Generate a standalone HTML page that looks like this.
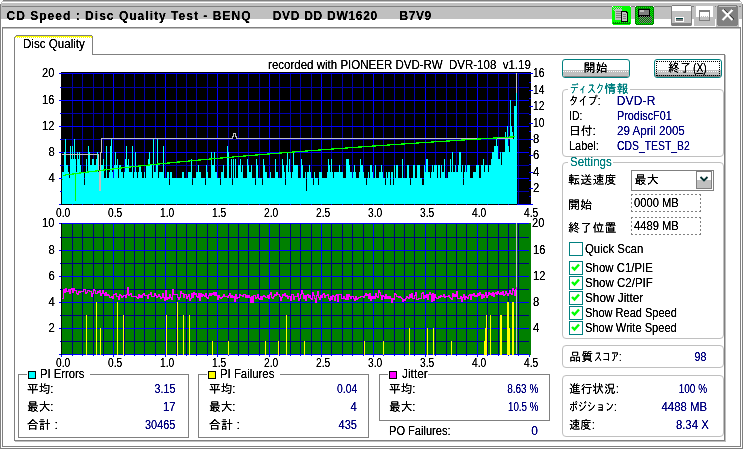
<!DOCTYPE html>
<html><head><meta charset="utf-8"><title>CD Speed : Disc Quality Test</title>
<style>
html,body{margin:0;padding:0;background:#fff;}
body{width:743px;height:449px;position:relative;overflow:hidden;font-family:"Liberation Sans","IPAGothic","Noto Sans CJK JP",sans-serif;font-size:12px;}
.r{position:absolute;}
.t{position:absolute;white-space:pre;}
.i{display:inline-block;}
svg{position:absolute;left:0;top:0;}
#txt{position:absolute;left:0;top:0;width:743px;height:449px;}
.t{filter:url(#thr);}
.t.k{filter:url(#thk);}
</style></head><body>
<svg width="0" height="0"><defs><filter id="thr" x="-5%" y="-25%" width="110%" height="150%" color-interpolation-filters="sRGB"><feComponentTransfer><feFuncA type="linear" slope="1.8" intercept="-0.15"/></feComponentTransfer></filter><filter id="thk" x="-5%" y="-25%" width="110%" height="150%" color-interpolation-filters="sRGB"><feComponentTransfer><feFuncA type="linear" slope="2" intercept="-0.2"/></feComponentTransfer></filter></defs></svg>
<div class="r" style="left:0px;top:0px;width:743px;height:449px;background:#fff;"></div><div class="r" style="left:0px;top:0px;width:743px;height:1px;background:#808080;"></div><div class="r" style="left:0px;top:1px;width:743px;height:1px;background:#c0c0c0;"></div><div class="r" style="left:0px;top:2px;width:743px;height:1px;background:#fff;"></div><div class="r" style="left:0px;top:3px;width:743px;height:3px;background:#c0c0c0;"></div><div class="r" style="left:0px;top:6px;width:743px;height:1px;background:#808080;"></div><div class="r" style="left:0px;top:7px;width:743px;height:12px;background:#c0c0c0;"></div><div class="r" style="left:0px;top:19px;width:743px;height:8px;background:#fff;"></div><div class="r" style="left:0px;top:27px;width:743px;height:1px;background:#808080;"></div><div class="r" style="left:0px;top:28px;width:743px;height:1px;background:#c0c0c0;"></div><div class="r" style="left:0px;top:0px;width:1px;height:449px;background:#808080;"></div><div class="r" style="left:1px;top:1px;width:1px;height:18px;background:#c0c0c0;"></div><div class="r" style="left:1px;top:19px;width:1px;height:429px;background:#fff;"></div><div class="r" style="left:2px;top:27px;width:1px;height:420px;background:#808080;"></div><div class="r" style="left:742px;top:0px;width:1px;height:449px;background:#808080;"></div><div class="r" style="left:741px;top:1px;width:1px;height:18px;background:#c0c0c0;"></div><div class="r" style="left:741px;top:19px;width:1px;height:429px;background:#fff;"></div><div class="r" style="left:740px;top:27px;width:1px;height:420px;background:#808080;"></div><div class="r" style="left:0px;top:448px;width:743px;height:1px;background:#808080;"></div><div class="r" style="left:1px;top:447px;width:741px;height:1px;background:#fff;"></div><div class="r" style="left:2px;top:446px;width:739px;height:1px;background:#808080;"></div><div class="r" style="left:0px;top:0px;width:3px;height:1px;background:#fff;"></div><div class="r" style="left:740px;top:0px;width:3px;height:1px;background:#fff;"></div><div class="r" style="left:0px;top:1px;width:2px;height:1px;background:#fff;"></div><div class="r" style="left:741px;top:1px;width:2px;height:1px;background:#fff;"></div><div class="r" style="left:0px;top:2px;width:1px;height:1px;background:#fff;"></div><div class="r" style="left:742px;top:2px;width:1px;height:1px;background:#fff;"></div><div class="r" style="left:0px;top:3px;width:1px;height:1px;background:#fff;"></div><div class="r" style="left:742px;top:3px;width:1px;height:1px;background:#fff;"></div><div class="r" style="left:14px;top:54px;width:711px;height:1px;background:#808080;"></div><div class="r" style="left:14px;top:54px;width:1px;height:387px;background:#808080;"></div><div class="r" style="left:724px;top:54px;width:1px;height:387px;background:#808080;"></div><div class="r" style="left:725px;top:55px;width:1px;height:387px;background:#c0c0c0;"></div><div class="r" style="left:14px;top:440px;width:711px;height:1px;background:#808080;"></div><div class="r" style="left:15px;top:441px;width:711px;height:1px;background:#c0c0c0;"></div><div class="r" style="left:14px;top:37px;width:1px;height:18px;background:#808080;"></div><div class="r" style="left:92px;top:37px;width:1px;height:18px;background:#808080;"></div><div class="r" style="left:16px;top:35px;width:76px;height:1px;background:#808080;"></div><div class="r" style="left:15px;top:36px;width:1px;height:1px;background:#808080;"></div><div class="r" style="left:92px;top:36px;width:1px;height:1px;background:#808080;"></div><div class="r" style="left:16px;top:36px;width:76px;height:1px;background:#ffff00;"></div><div class="r" style="left:15px;top:37px;width:77px;height:1px;background:repeating-linear-gradient(90deg,#ffff00 0 1px,#fff 1px 2px);"></div><div class="r" style="left:15px;top:38px;width:77px;height:17px;background:#fff;"></div><svg width="743" height="449" viewBox="0 0 743 449" shape-rendering="crispEdges"><rect x="61" y="72" width="470" height="133" fill="#000"/><rect x="72" y="73" width="1" height="132" fill="#0000aa"/><rect x="82" y="73" width="1" height="132" fill="#0000aa"/><rect x="93" y="73" width="1" height="132" fill="#0000aa"/><rect x="103" y="73" width="1" height="132" fill="#0000aa"/><rect x="113" y="73" width="1" height="132" fill="#0000ff"/><rect x="124" y="73" width="1" height="132" fill="#0000aa"/><rect x="134" y="73" width="1" height="132" fill="#0000aa"/><rect x="144" y="73" width="1" height="132" fill="#0000aa"/><rect x="155" y="73" width="1" height="132" fill="#0000aa"/><rect x="165" y="73" width="1" height="132" fill="#0000ff"/><rect x="176" y="73" width="1" height="132" fill="#0000aa"/><rect x="186" y="73" width="1" height="132" fill="#0000aa"/><rect x="196" y="73" width="1" height="132" fill="#0000aa"/><rect x="207" y="73" width="1" height="132" fill="#0000aa"/><rect x="217" y="73" width="1" height="132" fill="#0000ff"/><rect x="228" y="73" width="1" height="132" fill="#0000aa"/><rect x="238" y="73" width="1" height="132" fill="#0000aa"/><rect x="248" y="73" width="1" height="132" fill="#0000aa"/><rect x="259" y="73" width="1" height="132" fill="#0000aa"/><rect x="269" y="73" width="1" height="132" fill="#0000ff"/><rect x="279" y="73" width="1" height="132" fill="#0000aa"/><rect x="290" y="73" width="1" height="132" fill="#0000aa"/><rect x="300" y="73" width="1" height="132" fill="#0000aa"/><rect x="311" y="73" width="1" height="132" fill="#0000aa"/><rect x="321" y="73" width="1" height="132" fill="#0000ff"/><rect x="331" y="73" width="1" height="132" fill="#0000aa"/><rect x="342" y="73" width="1" height="132" fill="#0000aa"/><rect x="352" y="73" width="1" height="132" fill="#0000aa"/><rect x="363" y="73" width="1" height="132" fill="#0000aa"/><rect x="373" y="73" width="1" height="132" fill="#0000ff"/><rect x="383" y="73" width="1" height="132" fill="#0000aa"/><rect x="394" y="73" width="1" height="132" fill="#0000aa"/><rect x="404" y="73" width="1" height="132" fill="#0000aa"/><rect x="414" y="73" width="1" height="132" fill="#0000aa"/><rect x="425" y="73" width="1" height="132" fill="#0000ff"/><rect x="435" y="73" width="1" height="132" fill="#0000aa"/><rect x="446" y="73" width="1" height="132" fill="#0000aa"/><rect x="456" y="73" width="1" height="132" fill="#0000aa"/><rect x="466" y="73" width="1" height="132" fill="#0000aa"/><rect x="477" y="73" width="1" height="132" fill="#0000ff"/><rect x="487" y="73" width="1" height="132" fill="#0000aa"/><rect x="498" y="73" width="1" height="132" fill="#0000aa"/><rect x="508" y="73" width="1" height="132" fill="#0000aa"/><rect x="518" y="73" width="1" height="132" fill="#0000aa"/><rect x="61" y="191" width="468" height="1" fill="#0000aa"/><rect x="61" y="178" width="468" height="1" fill="#0000ff"/><rect x="61" y="165" width="468" height="1" fill="#0000aa"/><rect x="61" y="152" width="468" height="1" fill="#0000ff"/><rect x="61" y="139" width="468" height="1" fill="#0000aa"/><rect x="61" y="126" width="468" height="1" fill="#0000ff"/><rect x="61" y="113" width="468" height="1" fill="#0000aa"/><rect x="61" y="100" width="468" height="1" fill="#0000ff"/><rect x="61" y="87" width="468" height="1" fill="#0000aa"/><rect x="61" y="73" width="468" height="1" fill="#0000ff"/><rect x="59" y="204" width="2" height="1" fill="#0000ff"/><rect x="60" y="191" width="1" height="1" fill="#0000ff"/><rect x="59" y="178" width="2" height="1" fill="#0000ff"/><rect x="60" y="165" width="1" height="1" fill="#0000ff"/><rect x="59" y="152" width="2" height="1" fill="#0000ff"/><rect x="60" y="139" width="1" height="1" fill="#0000ff"/><rect x="59" y="126" width="2" height="1" fill="#0000ff"/><rect x="60" y="113" width="1" height="1" fill="#0000ff"/><rect x="59" y="100" width="2" height="1" fill="#0000ff"/><rect x="60" y="87" width="1" height="1" fill="#0000ff"/><rect x="59" y="73" width="2" height="1" fill="#0000ff"/><rect x="529" y="204" width="4" height="1" fill="#0000ff"/><rect x="529" y="196" width="2" height="1" fill="#0000ff"/><rect x="529" y="188" width="4" height="1" fill="#0000ff"/><rect x="529" y="180" width="2" height="1" fill="#0000ff"/><rect x="529" y="172" width="4" height="1" fill="#0000ff"/><rect x="529" y="164" width="2" height="1" fill="#0000ff"/><rect x="529" y="155" width="4" height="1" fill="#0000ff"/><rect x="529" y="147" width="2" height="1" fill="#0000ff"/><rect x="529" y="139" width="4" height="1" fill="#0000ff"/><rect x="529" y="131" width="2" height="1" fill="#0000ff"/><rect x="529" y="123" width="4" height="1" fill="#0000ff"/><rect x="529" y="114" width="2" height="1" fill="#0000ff"/><rect x="529" y="106" width="4" height="1" fill="#0000ff"/><rect x="529" y="98" width="2" height="1" fill="#0000ff"/><rect x="529" y="90" width="4" height="1" fill="#0000ff"/><rect x="529" y="82" width="2" height="1" fill="#0000ff"/><rect x="529" y="73" width="4" height="1" fill="#0000ff"/><rect x="516" y="73" width="1" height="131" fill="#c0c0c0"/><rect x="62" y="172" width="1" height="32" fill="#00ffff"/><rect x="63" y="172" width="1" height="32" fill="#00ffff"/><rect x="64" y="152" width="1" height="52" fill="#00ffff"/><rect x="65" y="139" width="1" height="65" fill="#00ffff"/><rect x="66" y="165" width="1" height="39" fill="#00ffff"/><rect x="67" y="165" width="1" height="39" fill="#00ffff"/><rect x="68" y="172" width="1" height="32" fill="#00ffff"/><rect x="69" y="178" width="1" height="26" fill="#00ffff"/><rect x="70" y="146" width="1" height="58" fill="#00ffff"/><rect x="71" y="159" width="1" height="45" fill="#00ffff"/><rect x="72" y="146" width="1" height="58" fill="#00ffff"/><rect x="73" y="159" width="1" height="45" fill="#00ffff"/><rect x="74" y="139" width="1" height="65" fill="#00ffff"/><rect x="75" y="159" width="1" height="45" fill="#00ffff"/><rect x="76" y="172" width="1" height="32" fill="#00ffff"/><rect x="77" y="152" width="1" height="52" fill="#00ffff"/><rect x="78" y="159" width="1" height="45" fill="#00ffff"/><rect x="79" y="152" width="1" height="52" fill="#00ffff"/><rect x="80" y="165" width="1" height="39" fill="#00ffff"/><rect x="81" y="172" width="1" height="32" fill="#00ffff"/><rect x="82" y="172" width="1" height="32" fill="#00ffff"/><rect x="83" y="172" width="1" height="32" fill="#00ffff"/><rect x="84" y="185" width="1" height="19" fill="#00ffff"/><rect x="85" y="172" width="1" height="32" fill="#00ffff"/><rect x="86" y="159" width="1" height="45" fill="#00ffff"/><rect x="87" y="172" width="1" height="32" fill="#00ffff"/><rect x="88" y="146" width="1" height="58" fill="#00ffff"/><rect x="89" y="152" width="1" height="52" fill="#00ffff"/><rect x="90" y="165" width="1" height="39" fill="#00ffff"/><rect x="91" y="165" width="1" height="39" fill="#00ffff"/><rect x="92" y="159" width="1" height="45" fill="#00ffff"/><rect x="93" y="159" width="1" height="45" fill="#00ffff"/><rect x="94" y="165" width="1" height="39" fill="#00ffff"/><rect x="95" y="165" width="1" height="39" fill="#00ffff"/><rect x="96" y="159" width="1" height="45" fill="#00ffff"/><rect x="97" y="152" width="1" height="52" fill="#00ffff"/><rect x="98" y="172" width="1" height="32" fill="#00ffff"/><rect x="99" y="172" width="1" height="32" fill="#00ffff"/><rect x="100" y="172" width="1" height="32" fill="#00ffff"/><rect x="101" y="165" width="1" height="39" fill="#00ffff"/><rect x="102" y="165" width="1" height="39" fill="#00ffff"/><rect x="103" y="159" width="1" height="45" fill="#00ffff"/><rect x="104" y="178" width="1" height="26" fill="#00ffff"/><rect x="105" y="178" width="1" height="26" fill="#00ffff"/><rect x="106" y="146" width="1" height="58" fill="#00ffff"/><rect x="107" y="178" width="1" height="26" fill="#00ffff"/><rect x="108" y="178" width="1" height="26" fill="#00ffff"/><rect x="109" y="172" width="1" height="32" fill="#00ffff"/><rect x="110" y="146" width="1" height="58" fill="#00ffff"/><rect x="111" y="139" width="1" height="65" fill="#00ffff"/><rect x="112" y="172" width="1" height="32" fill="#00ffff"/><rect x="113" y="178" width="1" height="26" fill="#00ffff"/><rect x="114" y="165" width="1" height="39" fill="#00ffff"/><rect x="115" y="152" width="1" height="52" fill="#00ffff"/><rect x="116" y="165" width="1" height="39" fill="#00ffff"/><rect x="117" y="159" width="1" height="45" fill="#00ffff"/><rect x="118" y="178" width="1" height="26" fill="#00ffff"/><rect x="119" y="165" width="1" height="39" fill="#00ffff"/><rect x="120" y="165" width="1" height="39" fill="#00ffff"/><rect x="121" y="172" width="1" height="32" fill="#00ffff"/><rect x="122" y="172" width="1" height="32" fill="#00ffff"/><rect x="123" y="178" width="1" height="26" fill="#00ffff"/><rect x="124" y="172" width="1" height="32" fill="#00ffff"/><rect x="125" y="159" width="1" height="45" fill="#00ffff"/><rect x="126" y="146" width="1" height="58" fill="#00ffff"/><rect x="127" y="165" width="1" height="39" fill="#00ffff"/><rect x="128" y="159" width="1" height="45" fill="#00ffff"/><rect x="129" y="172" width="1" height="32" fill="#00ffff"/><rect x="130" y="172" width="1" height="32" fill="#00ffff"/><rect x="131" y="172" width="1" height="32" fill="#00ffff"/><rect x="132" y="146" width="1" height="58" fill="#00ffff"/><rect x="133" y="178" width="1" height="26" fill="#00ffff"/><rect x="134" y="172" width="1" height="32" fill="#00ffff"/><rect x="135" y="152" width="1" height="52" fill="#00ffff"/><rect x="136" y="172" width="1" height="32" fill="#00ffff"/><rect x="137" y="178" width="1" height="26" fill="#00ffff"/><rect x="138" y="172" width="1" height="32" fill="#00ffff"/><rect x="139" y="165" width="1" height="39" fill="#00ffff"/><rect x="140" y="165" width="1" height="39" fill="#00ffff"/><rect x="141" y="172" width="1" height="32" fill="#00ffff"/><rect x="142" y="178" width="1" height="26" fill="#00ffff"/><rect x="143" y="178" width="1" height="26" fill="#00ffff"/><rect x="144" y="172" width="1" height="32" fill="#00ffff"/><rect x="145" y="178" width="1" height="26" fill="#00ffff"/><rect x="146" y="165" width="1" height="39" fill="#00ffff"/><rect x="147" y="165" width="1" height="39" fill="#00ffff"/><rect x="148" y="159" width="1" height="45" fill="#00ffff"/><rect x="149" y="152" width="1" height="52" fill="#00ffff"/><rect x="150" y="165" width="1" height="39" fill="#00ffff"/><rect x="151" y="165" width="1" height="39" fill="#00ffff"/><rect x="152" y="178" width="1" height="26" fill="#00ffff"/><rect x="153" y="139" width="1" height="65" fill="#00ffff"/><rect x="154" y="172" width="1" height="32" fill="#00ffff"/><rect x="155" y="172" width="1" height="32" fill="#00ffff"/><rect x="156" y="165" width="1" height="39" fill="#00ffff"/><rect x="157" y="139" width="1" height="65" fill="#00ffff"/><rect x="158" y="178" width="1" height="26" fill="#00ffff"/><rect x="159" y="172" width="1" height="32" fill="#00ffff"/><rect x="160" y="172" width="1" height="32" fill="#00ffff"/><rect x="161" y="172" width="1" height="32" fill="#00ffff"/><rect x="162" y="172" width="1" height="32" fill="#00ffff"/><rect x="163" y="146" width="1" height="58" fill="#00ffff"/><rect x="164" y="178" width="1" height="26" fill="#00ffff"/><rect x="165" y="178" width="1" height="26" fill="#00ffff"/><rect x="166" y="178" width="1" height="26" fill="#00ffff"/><rect x="167" y="172" width="1" height="32" fill="#00ffff"/><rect x="168" y="172" width="1" height="32" fill="#00ffff"/><rect x="169" y="185" width="1" height="19" fill="#00ffff"/><rect x="170" y="172" width="1" height="32" fill="#00ffff"/><rect x="171" y="172" width="1" height="32" fill="#00ffff"/><rect x="172" y="178" width="1" height="26" fill="#00ffff"/><rect x="173" y="178" width="1" height="26" fill="#00ffff"/><rect x="174" y="178" width="1" height="26" fill="#00ffff"/><rect x="175" y="178" width="1" height="26" fill="#00ffff"/><rect x="176" y="178" width="1" height="26" fill="#00ffff"/><rect x="177" y="178" width="1" height="26" fill="#00ffff"/><rect x="178" y="178" width="1" height="26" fill="#00ffff"/><rect x="179" y="178" width="1" height="26" fill="#00ffff"/><rect x="180" y="178" width="1" height="26" fill="#00ffff"/><rect x="181" y="178" width="1" height="26" fill="#00ffff"/><rect x="182" y="172" width="1" height="32" fill="#00ffff"/><rect x="183" y="172" width="1" height="32" fill="#00ffff"/><rect x="184" y="178" width="1" height="26" fill="#00ffff"/><rect x="185" y="178" width="1" height="26" fill="#00ffff"/><rect x="186" y="178" width="1" height="26" fill="#00ffff"/><rect x="187" y="178" width="1" height="26" fill="#00ffff"/><rect x="188" y="172" width="1" height="32" fill="#00ffff"/><rect x="189" y="172" width="1" height="32" fill="#00ffff"/><rect x="190" y="172" width="1" height="32" fill="#00ffff"/><rect x="191" y="159" width="1" height="45" fill="#00ffff"/><rect x="192" y="185" width="1" height="19" fill="#00ffff"/><rect x="193" y="178" width="1" height="26" fill="#00ffff"/><rect x="194" y="178" width="1" height="26" fill="#00ffff"/><rect x="195" y="178" width="1" height="26" fill="#00ffff"/><rect x="196" y="172" width="1" height="32" fill="#00ffff"/><rect x="197" y="172" width="1" height="32" fill="#00ffff"/><rect x="198" y="165" width="1" height="39" fill="#00ffff"/><rect x="199" y="172" width="1" height="32" fill="#00ffff"/><rect x="200" y="172" width="1" height="32" fill="#00ffff"/><rect x="201" y="178" width="1" height="26" fill="#00ffff"/><rect x="202" y="178" width="1" height="26" fill="#00ffff"/><rect x="203" y="178" width="1" height="26" fill="#00ffff"/><rect x="204" y="178" width="1" height="26" fill="#00ffff"/><rect x="205" y="185" width="1" height="19" fill="#00ffff"/><rect x="206" y="165" width="1" height="39" fill="#00ffff"/><rect x="207" y="172" width="1" height="32" fill="#00ffff"/><rect x="208" y="178" width="1" height="26" fill="#00ffff"/><rect x="209" y="178" width="1" height="26" fill="#00ffff"/><rect x="210" y="178" width="1" height="26" fill="#00ffff"/><rect x="211" y="152" width="1" height="52" fill="#00ffff"/><rect x="212" y="165" width="1" height="39" fill="#00ffff"/><rect x="213" y="165" width="1" height="39" fill="#00ffff"/><rect x="214" y="152" width="1" height="52" fill="#00ffff"/><rect x="215" y="172" width="1" height="32" fill="#00ffff"/><rect x="216" y="172" width="1" height="32" fill="#00ffff"/><rect x="217" y="178" width="1" height="26" fill="#00ffff"/><rect x="218" y="178" width="1" height="26" fill="#00ffff"/><rect x="219" y="178" width="1" height="26" fill="#00ffff"/><rect x="220" y="185" width="1" height="19" fill="#00ffff"/><rect x="221" y="172" width="1" height="32" fill="#00ffff"/><rect x="222" y="172" width="1" height="32" fill="#00ffff"/><rect x="223" y="165" width="1" height="39" fill="#00ffff"/><rect x="224" y="178" width="1" height="26" fill="#00ffff"/><rect x="225" y="178" width="1" height="26" fill="#00ffff"/><rect x="226" y="178" width="1" height="26" fill="#00ffff"/><rect x="227" y="146" width="1" height="58" fill="#00ffff"/><rect x="228" y="152" width="1" height="52" fill="#00ffff"/><rect x="229" y="178" width="1" height="26" fill="#00ffff"/><rect x="230" y="178" width="1" height="26" fill="#00ffff"/><rect x="231" y="159" width="1" height="45" fill="#00ffff"/><rect x="232" y="185" width="1" height="19" fill="#00ffff"/><rect x="233" y="159" width="1" height="45" fill="#00ffff"/><rect x="234" y="178" width="1" height="26" fill="#00ffff"/><rect x="235" y="159" width="1" height="45" fill="#00ffff"/><rect x="236" y="178" width="1" height="26" fill="#00ffff"/><rect x="237" y="178" width="1" height="26" fill="#00ffff"/><rect x="238" y="165" width="1" height="39" fill="#00ffff"/><rect x="239" y="165" width="1" height="39" fill="#00ffff"/><rect x="240" y="159" width="1" height="45" fill="#00ffff"/><rect x="241" y="172" width="1" height="32" fill="#00ffff"/><rect x="242" y="165" width="1" height="39" fill="#00ffff"/><rect x="243" y="178" width="1" height="26" fill="#00ffff"/><rect x="244" y="178" width="1" height="26" fill="#00ffff"/><rect x="245" y="178" width="1" height="26" fill="#00ffff"/><rect x="246" y="178" width="1" height="26" fill="#00ffff"/><rect x="247" y="159" width="1" height="45" fill="#00ffff"/><rect x="248" y="165" width="1" height="39" fill="#00ffff"/><rect x="249" y="172" width="1" height="32" fill="#00ffff"/><rect x="250" y="172" width="1" height="32" fill="#00ffff"/><rect x="251" y="165" width="1" height="39" fill="#00ffff"/><rect x="252" y="178" width="1" height="26" fill="#00ffff"/><rect x="253" y="178" width="1" height="26" fill="#00ffff"/><rect x="254" y="178" width="1" height="26" fill="#00ffff"/><rect x="255" y="185" width="1" height="19" fill="#00ffff"/><rect x="256" y="159" width="1" height="45" fill="#00ffff"/><rect x="257" y="165" width="1" height="39" fill="#00ffff"/><rect x="258" y="178" width="1" height="26" fill="#00ffff"/><rect x="259" y="178" width="1" height="26" fill="#00ffff"/><rect x="260" y="178" width="1" height="26" fill="#00ffff"/><rect x="261" y="178" width="1" height="26" fill="#00ffff"/><rect x="262" y="185" width="1" height="19" fill="#00ffff"/><rect x="263" y="159" width="1" height="45" fill="#00ffff"/><rect x="264" y="165" width="1" height="39" fill="#00ffff"/><rect x="265" y="172" width="1" height="32" fill="#00ffff"/><rect x="266" y="172" width="1" height="32" fill="#00ffff"/><rect x="267" y="178" width="1" height="26" fill="#00ffff"/><rect x="268" y="178" width="1" height="26" fill="#00ffff"/><rect x="269" y="178" width="1" height="26" fill="#00ffff"/><rect x="270" y="172" width="1" height="32" fill="#00ffff"/><rect x="271" y="178" width="1" height="26" fill="#00ffff"/><rect x="272" y="178" width="1" height="26" fill="#00ffff"/><rect x="273" y="178" width="1" height="26" fill="#00ffff"/><rect x="274" y="178" width="1" height="26" fill="#00ffff"/><rect x="275" y="159" width="1" height="45" fill="#00ffff"/><rect x="276" y="172" width="1" height="32" fill="#00ffff"/><rect x="277" y="172" width="1" height="32" fill="#00ffff"/><rect x="278" y="178" width="1" height="26" fill="#00ffff"/><rect x="279" y="178" width="1" height="26" fill="#00ffff"/><rect x="280" y="178" width="1" height="26" fill="#00ffff"/><rect x="281" y="178" width="1" height="26" fill="#00ffff"/><rect x="282" y="159" width="1" height="45" fill="#00ffff"/><rect x="283" y="165" width="1" height="39" fill="#00ffff"/><rect x="284" y="172" width="1" height="32" fill="#00ffff"/><rect x="285" y="185" width="1" height="19" fill="#00ffff"/><rect x="286" y="165" width="1" height="39" fill="#00ffff"/><rect x="287" y="152" width="1" height="52" fill="#00ffff"/><rect x="288" y="172" width="1" height="32" fill="#00ffff"/><rect x="289" y="159" width="1" height="45" fill="#00ffff"/><rect x="290" y="172" width="1" height="32" fill="#00ffff"/><rect x="291" y="178" width="1" height="26" fill="#00ffff"/><rect x="292" y="172" width="1" height="32" fill="#00ffff"/><rect x="293" y="152" width="1" height="52" fill="#00ffff"/><rect x="294" y="165" width="1" height="39" fill="#00ffff"/><rect x="295" y="165" width="1" height="39" fill="#00ffff"/><rect x="296" y="165" width="1" height="39" fill="#00ffff"/><rect x="297" y="165" width="1" height="39" fill="#00ffff"/><rect x="298" y="178" width="1" height="26" fill="#00ffff"/><rect x="299" y="178" width="1" height="26" fill="#00ffff"/><rect x="300" y="178" width="1" height="26" fill="#00ffff"/><rect x="301" y="159" width="1" height="45" fill="#00ffff"/><rect x="302" y="165" width="1" height="39" fill="#00ffff"/><rect x="303" y="178" width="1" height="26" fill="#00ffff"/><rect x="304" y="178" width="1" height="26" fill="#00ffff"/><rect x="305" y="172" width="1" height="32" fill="#00ffff"/><rect x="306" y="191" width="1" height="13" fill="#00ffff"/><rect x="307" y="172" width="1" height="32" fill="#00ffff"/><rect x="308" y="172" width="1" height="32" fill="#00ffff"/><rect x="309" y="165" width="1" height="39" fill="#00ffff"/><rect x="310" y="172" width="1" height="32" fill="#00ffff"/><rect x="311" y="178" width="1" height="26" fill="#00ffff"/><rect x="312" y="178" width="1" height="26" fill="#00ffff"/><rect x="313" y="185" width="1" height="19" fill="#00ffff"/><rect x="314" y="172" width="1" height="32" fill="#00ffff"/><rect x="315" y="178" width="1" height="26" fill="#00ffff"/><rect x="316" y="178" width="1" height="26" fill="#00ffff"/><rect x="317" y="178" width="1" height="26" fill="#00ffff"/><rect x="318" y="185" width="1" height="19" fill="#00ffff"/><rect x="319" y="172" width="1" height="32" fill="#00ffff"/><rect x="320" y="172" width="1" height="32" fill="#00ffff"/><rect x="321" y="172" width="1" height="32" fill="#00ffff"/><rect x="322" y="178" width="1" height="26" fill="#00ffff"/><rect x="323" y="178" width="1" height="26" fill="#00ffff"/><rect x="324" y="178" width="1" height="26" fill="#00ffff"/><rect x="325" y="178" width="1" height="26" fill="#00ffff"/><rect x="326" y="178" width="1" height="26" fill="#00ffff"/><rect x="327" y="172" width="1" height="32" fill="#00ffff"/><rect x="328" y="159" width="1" height="45" fill="#00ffff"/><rect x="329" y="165" width="1" height="39" fill="#00ffff"/><rect x="330" y="172" width="1" height="32" fill="#00ffff"/><rect x="331" y="159" width="1" height="45" fill="#00ffff"/><rect x="332" y="172" width="1" height="32" fill="#00ffff"/><rect x="333" y="178" width="1" height="26" fill="#00ffff"/><rect x="334" y="172" width="1" height="32" fill="#00ffff"/><rect x="335" y="172" width="1" height="32" fill="#00ffff"/><rect x="336" y="172" width="1" height="32" fill="#00ffff"/><rect x="337" y="172" width="1" height="32" fill="#00ffff"/><rect x="338" y="172" width="1" height="32" fill="#00ffff"/><rect x="339" y="165" width="1" height="39" fill="#00ffff"/><rect x="340" y="172" width="1" height="32" fill="#00ffff"/><rect x="341" y="172" width="1" height="32" fill="#00ffff"/><rect x="342" y="172" width="1" height="32" fill="#00ffff"/><rect x="343" y="178" width="1" height="26" fill="#00ffff"/><rect x="344" y="178" width="1" height="26" fill="#00ffff"/><rect x="345" y="178" width="1" height="26" fill="#00ffff"/><rect x="346" y="159" width="1" height="45" fill="#00ffff"/><rect x="347" y="159" width="1" height="45" fill="#00ffff"/><rect x="348" y="159" width="1" height="45" fill="#00ffff"/><rect x="349" y="165" width="1" height="39" fill="#00ffff"/><rect x="350" y="172" width="1" height="32" fill="#00ffff"/><rect x="351" y="172" width="1" height="32" fill="#00ffff"/><rect x="352" y="178" width="1" height="26" fill="#00ffff"/><rect x="353" y="172" width="1" height="32" fill="#00ffff"/><rect x="354" y="165" width="1" height="39" fill="#00ffff"/><rect x="355" y="172" width="1" height="32" fill="#00ffff"/><rect x="356" y="178" width="1" height="26" fill="#00ffff"/><rect x="357" y="178" width="1" height="26" fill="#00ffff"/><rect x="358" y="178" width="1" height="26" fill="#00ffff"/><rect x="359" y="172" width="1" height="32" fill="#00ffff"/><rect x="360" y="159" width="1" height="45" fill="#00ffff"/><rect x="361" y="165" width="1" height="39" fill="#00ffff"/><rect x="362" y="165" width="1" height="39" fill="#00ffff"/><rect x="363" y="172" width="1" height="32" fill="#00ffff"/><rect x="364" y="178" width="1" height="26" fill="#00ffff"/><rect x="365" y="178" width="1" height="26" fill="#00ffff"/><rect x="366" y="185" width="1" height="19" fill="#00ffff"/><rect x="367" y="178" width="1" height="26" fill="#00ffff"/><rect x="368" y="172" width="1" height="32" fill="#00ffff"/><rect x="369" y="178" width="1" height="26" fill="#00ffff"/><rect x="370" y="165" width="1" height="39" fill="#00ffff"/><rect x="371" y="165" width="1" height="39" fill="#00ffff"/><rect x="372" y="172" width="1" height="32" fill="#00ffff"/><rect x="373" y="178" width="1" height="26" fill="#00ffff"/><rect x="374" y="178" width="1" height="26" fill="#00ffff"/><rect x="375" y="165" width="1" height="39" fill="#00ffff"/><rect x="376" y="178" width="1" height="26" fill="#00ffff"/><rect x="377" y="178" width="1" height="26" fill="#00ffff"/><rect x="378" y="178" width="1" height="26" fill="#00ffff"/><rect x="379" y="172" width="1" height="32" fill="#00ffff"/><rect x="380" y="172" width="1" height="32" fill="#00ffff"/><rect x="381" y="165" width="1" height="39" fill="#00ffff"/><rect x="382" y="172" width="1" height="32" fill="#00ffff"/><rect x="383" y="178" width="1" height="26" fill="#00ffff"/><rect x="384" y="178" width="1" height="26" fill="#00ffff"/><rect x="385" y="185" width="1" height="19" fill="#00ffff"/><rect x="386" y="172" width="1" height="32" fill="#00ffff"/><rect x="387" y="178" width="1" height="26" fill="#00ffff"/><rect x="388" y="172" width="1" height="32" fill="#00ffff"/><rect x="389" y="172" width="1" height="32" fill="#00ffff"/><rect x="390" y="185" width="1" height="19" fill="#00ffff"/><rect x="391" y="172" width="1" height="32" fill="#00ffff"/><rect x="392" y="172" width="1" height="32" fill="#00ffff"/><rect x="393" y="185" width="1" height="19" fill="#00ffff"/><rect x="394" y="165" width="1" height="39" fill="#00ffff"/><rect x="395" y="178" width="1" height="26" fill="#00ffff"/><rect x="396" y="165" width="1" height="39" fill="#00ffff"/><rect x="397" y="165" width="1" height="39" fill="#00ffff"/><rect x="398" y="178" width="1" height="26" fill="#00ffff"/><rect x="399" y="178" width="1" height="26" fill="#00ffff"/><rect x="400" y="178" width="1" height="26" fill="#00ffff"/><rect x="401" y="178" width="1" height="26" fill="#00ffff"/><rect x="402" y="159" width="1" height="45" fill="#00ffff"/><rect x="403" y="178" width="1" height="26" fill="#00ffff"/><rect x="404" y="178" width="1" height="26" fill="#00ffff"/><rect x="405" y="178" width="1" height="26" fill="#00ffff"/><rect x="406" y="178" width="1" height="26" fill="#00ffff"/><rect x="407" y="165" width="1" height="39" fill="#00ffff"/><rect x="408" y="165" width="1" height="39" fill="#00ffff"/><rect x="409" y="178" width="1" height="26" fill="#00ffff"/><rect x="410" y="185" width="1" height="19" fill="#00ffff"/><rect x="411" y="178" width="1" height="26" fill="#00ffff"/><rect x="412" y="178" width="1" height="26" fill="#00ffff"/><rect x="413" y="165" width="1" height="39" fill="#00ffff"/><rect x="414" y="165" width="1" height="39" fill="#00ffff"/><rect x="415" y="178" width="1" height="26" fill="#00ffff"/><rect x="416" y="178" width="1" height="26" fill="#00ffff"/><rect x="417" y="165" width="1" height="39" fill="#00ffff"/><rect x="418" y="165" width="1" height="39" fill="#00ffff"/><rect x="419" y="165" width="1" height="39" fill="#00ffff"/><rect x="420" y="178" width="1" height="26" fill="#00ffff"/><rect x="421" y="178" width="1" height="26" fill="#00ffff"/><rect x="422" y="185" width="1" height="19" fill="#00ffff"/><rect x="423" y="185" width="1" height="19" fill="#00ffff"/><rect x="424" y="165" width="1" height="39" fill="#00ffff"/><rect x="425" y="172" width="1" height="32" fill="#00ffff"/><rect x="426" y="159" width="1" height="45" fill="#00ffff"/><rect x="427" y="159" width="1" height="45" fill="#00ffff"/><rect x="428" y="172" width="1" height="32" fill="#00ffff"/><rect x="429" y="172" width="1" height="32" fill="#00ffff"/><rect x="430" y="178" width="1" height="26" fill="#00ffff"/><rect x="431" y="172" width="1" height="32" fill="#00ffff"/><rect x="432" y="165" width="1" height="39" fill="#00ffff"/><rect x="433" y="172" width="1" height="32" fill="#00ffff"/><rect x="434" y="165" width="1" height="39" fill="#00ffff"/><rect x="435" y="165" width="1" height="39" fill="#00ffff"/><rect x="436" y="165" width="1" height="39" fill="#00ffff"/><rect x="437" y="178" width="1" height="26" fill="#00ffff"/><rect x="438" y="165" width="1" height="39" fill="#00ffff"/><rect x="439" y="165" width="1" height="39" fill="#00ffff"/><rect x="440" y="178" width="1" height="26" fill="#00ffff"/><rect x="441" y="165" width="1" height="39" fill="#00ffff"/><rect x="442" y="172" width="1" height="32" fill="#00ffff"/><rect x="443" y="172" width="1" height="32" fill="#00ffff"/><rect x="444" y="159" width="1" height="45" fill="#00ffff"/><rect x="445" y="178" width="1" height="26" fill="#00ffff"/><rect x="446" y="178" width="1" height="26" fill="#00ffff"/><rect x="447" y="178" width="1" height="26" fill="#00ffff"/><rect x="448" y="172" width="1" height="32" fill="#00ffff"/><rect x="449" y="172" width="1" height="32" fill="#00ffff"/><rect x="450" y="159" width="1" height="45" fill="#00ffff"/><rect x="451" y="172" width="1" height="32" fill="#00ffff"/><rect x="452" y="152" width="1" height="52" fill="#00ffff"/><rect x="453" y="172" width="1" height="32" fill="#00ffff"/><rect x="454" y="172" width="1" height="32" fill="#00ffff"/><rect x="455" y="165" width="1" height="39" fill="#00ffff"/><rect x="456" y="172" width="1" height="32" fill="#00ffff"/><rect x="457" y="172" width="1" height="32" fill="#00ffff"/><rect x="458" y="165" width="1" height="39" fill="#00ffff"/><rect x="459" y="152" width="1" height="52" fill="#00ffff"/><rect x="460" y="152" width="1" height="52" fill="#00ffff"/><rect x="461" y="172" width="1" height="32" fill="#00ffff"/><rect x="462" y="165" width="1" height="39" fill="#00ffff"/><rect x="463" y="185" width="1" height="19" fill="#00ffff"/><rect x="464" y="172" width="1" height="32" fill="#00ffff"/><rect x="465" y="165" width="1" height="39" fill="#00ffff"/><rect x="466" y="172" width="1" height="32" fill="#00ffff"/><rect x="467" y="165" width="1" height="39" fill="#00ffff"/><rect x="468" y="165" width="1" height="39" fill="#00ffff"/><rect x="469" y="165" width="1" height="39" fill="#00ffff"/><rect x="470" y="178" width="1" height="26" fill="#00ffff"/><rect x="471" y="178" width="1" height="26" fill="#00ffff"/><rect x="472" y="178" width="1" height="26" fill="#00ffff"/><rect x="473" y="172" width="1" height="32" fill="#00ffff"/><rect x="474" y="172" width="1" height="32" fill="#00ffff"/><rect x="475" y="172" width="1" height="32" fill="#00ffff"/><rect x="476" y="165" width="1" height="39" fill="#00ffff"/><rect x="477" y="165" width="1" height="39" fill="#00ffff"/><rect x="478" y="165" width="1" height="39" fill="#00ffff"/><rect x="479" y="178" width="1" height="26" fill="#00ffff"/><rect x="480" y="178" width="1" height="26" fill="#00ffff"/><rect x="481" y="165" width="1" height="39" fill="#00ffff"/><rect x="482" y="165" width="1" height="39" fill="#00ffff"/><rect x="483" y="159" width="1" height="45" fill="#00ffff"/><rect x="484" y="172" width="1" height="32" fill="#00ffff"/><rect x="485" y="165" width="1" height="39" fill="#00ffff"/><rect x="486" y="165" width="1" height="39" fill="#00ffff"/><rect x="487" y="165" width="1" height="39" fill="#00ffff"/><rect x="488" y="172" width="1" height="32" fill="#00ffff"/><rect x="489" y="165" width="1" height="39" fill="#00ffff"/><rect x="490" y="165" width="1" height="39" fill="#00ffff"/><rect x="491" y="159" width="1" height="45" fill="#00ffff"/><rect x="492" y="152" width="1" height="52" fill="#00ffff"/><rect x="493" y="152" width="1" height="52" fill="#00ffff"/><rect x="494" y="146" width="1" height="58" fill="#00ffff"/><rect x="495" y="146" width="1" height="58" fill="#00ffff"/><rect x="496" y="139" width="1" height="65" fill="#00ffff"/><rect x="497" y="146" width="1" height="58" fill="#00ffff"/><rect x="498" y="159" width="1" height="45" fill="#00ffff"/><rect x="499" y="159" width="1" height="45" fill="#00ffff"/><rect x="500" y="152" width="1" height="52" fill="#00ffff"/><rect x="501" y="165" width="1" height="39" fill="#00ffff"/><rect x="502" y="152" width="1" height="52" fill="#00ffff"/><rect x="503" y="152" width="1" height="52" fill="#00ffff"/><rect x="504" y="152" width="1" height="52" fill="#00ffff"/><rect x="505" y="132" width="1" height="72" fill="#00ffff"/><rect x="506" y="139" width="1" height="65" fill="#00ffff"/><rect x="507" y="126" width="1" height="78" fill="#00ffff"/><rect x="508" y="146" width="1" height="58" fill="#00ffff"/><rect x="509" y="152" width="1" height="52" fill="#00ffff"/><rect x="510" y="100" width="1" height="104" fill="#00ffff"/><rect x="511" y="126" width="1" height="78" fill="#00ffff"/><rect x="512" y="132" width="1" height="72" fill="#00ffff"/><rect x="513" y="139" width="1" height="65" fill="#00ffff"/><rect x="514" y="106" width="1" height="98" fill="#00ffff"/><rect x="515" y="106" width="1" height="98" fill="#00ffff"/><rect x="516" y="93" width="1" height="111" fill="#00ffff"/><rect x="61" y="204" width="456" height="1" fill="#000"/><rect x="72" y="204" width="1" height="1" fill="#0000ff"/><rect x="82" y="204" width="1" height="1" fill="#0000ff"/><rect x="93" y="204" width="1" height="1" fill="#0000ff"/><rect x="103" y="204" width="1" height="1" fill="#0000ff"/><rect x="113" y="204" width="1" height="1" fill="#0000ff"/><rect x="124" y="204" width="1" height="1" fill="#0000ff"/><rect x="134" y="204" width="1" height="1" fill="#0000ff"/><rect x="144" y="204" width="1" height="1" fill="#0000ff"/><rect x="155" y="204" width="1" height="1" fill="#0000ff"/><rect x="165" y="204" width="1" height="1" fill="#0000ff"/><rect x="176" y="204" width="1" height="1" fill="#0000ff"/><rect x="186" y="204" width="1" height="1" fill="#0000ff"/><rect x="196" y="204" width="1" height="1" fill="#0000ff"/><rect x="207" y="204" width="1" height="1" fill="#0000ff"/><rect x="217" y="204" width="1" height="1" fill="#0000ff"/><rect x="228" y="204" width="1" height="1" fill="#0000ff"/><rect x="238" y="204" width="1" height="1" fill="#0000ff"/><rect x="248" y="204" width="1" height="1" fill="#0000ff"/><rect x="259" y="204" width="1" height="1" fill="#0000ff"/><rect x="269" y="204" width="1" height="1" fill="#0000ff"/><rect x="279" y="204" width="1" height="1" fill="#0000ff"/><rect x="290" y="204" width="1" height="1" fill="#0000ff"/><rect x="300" y="204" width="1" height="1" fill="#0000ff"/><rect x="311" y="204" width="1" height="1" fill="#0000ff"/><rect x="321" y="204" width="1" height="1" fill="#0000ff"/><rect x="331" y="204" width="1" height="1" fill="#0000ff"/><rect x="342" y="204" width="1" height="1" fill="#0000ff"/><rect x="352" y="204" width="1" height="1" fill="#0000ff"/><rect x="363" y="204" width="1" height="1" fill="#0000ff"/><rect x="373" y="204" width="1" height="1" fill="#0000ff"/><rect x="383" y="204" width="1" height="1" fill="#0000ff"/><rect x="394" y="204" width="1" height="1" fill="#0000ff"/><rect x="404" y="204" width="1" height="1" fill="#0000ff"/><rect x="414" y="204" width="1" height="1" fill="#0000ff"/><rect x="425" y="204" width="1" height="1" fill="#0000ff"/><rect x="435" y="204" width="1" height="1" fill="#0000ff"/><rect x="446" y="204" width="1" height="1" fill="#0000ff"/><rect x="456" y="204" width="1" height="1" fill="#0000ff"/><rect x="466" y="204" width="1" height="1" fill="#0000ff"/><rect x="477" y="204" width="1" height="1" fill="#0000ff"/><rect x="487" y="204" width="1" height="1" fill="#0000ff"/><rect x="498" y="204" width="1" height="1" fill="#0000ff"/><rect x="508" y="204" width="1" height="1" fill="#0000ff"/><rect x="59" y="204" width="2" height="1" fill="#0000ff"/><rect x="517" y="204" width="16" height="1" fill="#0000ff"/><rect x="62" y="154" width="36" height="1" fill="#c0c0c0"/><rect x="98" y="154" width="1" height="17" fill="#c0c0c0"/><rect x="99" y="170" width="1" height="21" fill="#c0c0c0"/><rect x="100" y="152" width="1" height="39" fill="#c0c0c0"/><rect x="101" y="138" width="1" height="15" fill="#c0c0c0"/><rect x="101" y="138" width="131" height="1" fill="#c0c0c0"/><rect x="232" y="136" width="1" height="3" fill="#c0c0c0"/><rect x="233" y="133" width="1" height="4" fill="#c0c0c0"/><rect x="233" y="133" width="2" height="1" fill="#c0c0c0"/><rect x="235" y="133" width="1" height="4" fill="#c0c0c0"/><rect x="236" y="136" width="1" height="3" fill="#c0c0c0"/><rect x="236" y="138" width="277" height="1" fill="#c0c0c0"/><rect x="62" y="179" width="1" height="1" fill="#00ff00"/><rect x="63" y="175" width="1" height="1" fill="#00ff00"/><rect x="64" y="175" width="1" height="1" fill="#00ff00"/><rect x="65" y="174" width="1" height="2" fill="#00ff00"/><rect x="66" y="174" width="1" height="1" fill="#00ff00"/><rect x="67" y="174" width="1" height="1" fill="#00ff00"/><rect x="68" y="174" width="1" height="1" fill="#00ff00"/><rect x="69" y="174" width="1" height="1" fill="#00ff00"/><rect x="70" y="174" width="1" height="1" fill="#00ff00"/><rect x="71" y="174" width="1" height="1" fill="#00ff00"/><rect x="72" y="173" width="1" height="2" fill="#00ff00"/><rect x="73" y="173" width="1" height="2" fill="#00ff00"/><rect x="74" y="173" width="1" height="1" fill="#00ff00"/><rect x="75" y="173" width="1" height="1" fill="#00ff00"/><rect x="76" y="173" width="1" height="1" fill="#00ff00"/><rect x="77" y="173" width="1" height="1" fill="#00ff00"/><rect x="78" y="173" width="1" height="1" fill="#00ff00"/><rect x="79" y="172" width="1" height="2" fill="#00ff00"/><rect x="80" y="172" width="1" height="2" fill="#00ff00"/><rect x="81" y="172" width="1" height="1" fill="#00ff00"/><rect x="82" y="172" width="1" height="1" fill="#00ff00"/><rect x="83" y="172" width="1" height="1" fill="#00ff00"/><rect x="84" y="172" width="1" height="1" fill="#00ff00"/><rect x="85" y="172" width="1" height="1" fill="#00ff00"/><rect x="86" y="172" width="1" height="1" fill="#00ff00"/><rect x="87" y="171" width="1" height="2" fill="#00ff00"/><rect x="88" y="171" width="1" height="2" fill="#00ff00"/><rect x="89" y="171" width="1" height="1" fill="#00ff00"/><rect x="90" y="171" width="1" height="1" fill="#00ff00"/><rect x="91" y="171" width="1" height="1" fill="#00ff00"/><rect x="92" y="171" width="1" height="1" fill="#00ff00"/><rect x="93" y="171" width="1" height="1" fill="#00ff00"/><rect x="94" y="171" width="1" height="1" fill="#00ff00"/><rect x="95" y="170" width="1" height="2" fill="#00ff00"/><rect x="96" y="170" width="1" height="2" fill="#00ff00"/><rect x="97" y="170" width="1" height="1" fill="#00ff00"/><rect x="98" y="170" width="1" height="1" fill="#00ff00"/><rect x="99" y="170" width="1" height="1" fill="#00ff00"/><rect x="100" y="170" width="1" height="1" fill="#00ff00"/><rect x="101" y="170" width="1" height="1" fill="#00ff00"/><rect x="102" y="170" width="1" height="1" fill="#00ff00"/><rect x="103" y="169" width="1" height="2" fill="#00ff00"/><rect x="104" y="169" width="1" height="2" fill="#00ff00"/><rect x="105" y="169" width="1" height="1" fill="#00ff00"/><rect x="106" y="169" width="1" height="1" fill="#00ff00"/><rect x="107" y="169" width="1" height="1" fill="#00ff00"/><rect x="108" y="169" width="1" height="1" fill="#00ff00"/><rect x="109" y="169" width="1" height="1" fill="#00ff00"/><rect x="110" y="169" width="1" height="1" fill="#00ff00"/><rect x="111" y="169" width="1" height="1" fill="#00ff00"/><rect x="112" y="168" width="1" height="2" fill="#00ff00"/><rect x="113" y="168" width="1" height="2" fill="#00ff00"/><rect x="114" y="168" width="1" height="1" fill="#00ff00"/><rect x="115" y="168" width="1" height="1" fill="#00ff00"/><rect x="116" y="168" width="1" height="1" fill="#00ff00"/><rect x="117" y="168" width="1" height="1" fill="#00ff00"/><rect x="118" y="168" width="1" height="1" fill="#00ff00"/><rect x="119" y="168" width="1" height="1" fill="#00ff00"/><rect x="120" y="167" width="1" height="2" fill="#00ff00"/><rect x="121" y="167" width="1" height="2" fill="#00ff00"/><rect x="122" y="167" width="1" height="1" fill="#00ff00"/><rect x="123" y="167" width="1" height="1" fill="#00ff00"/><rect x="124" y="167" width="1" height="1" fill="#00ff00"/><rect x="125" y="167" width="1" height="1" fill="#00ff00"/><rect x="126" y="167" width="1" height="1" fill="#00ff00"/><rect x="127" y="167" width="1" height="1" fill="#00ff00"/><rect x="128" y="167" width="1" height="1" fill="#00ff00"/><rect x="129" y="166" width="1" height="2" fill="#00ff00"/><rect x="130" y="166" width="1" height="2" fill="#00ff00"/><rect x="131" y="166" width="1" height="1" fill="#00ff00"/><rect x="132" y="166" width="1" height="1" fill="#00ff00"/><rect x="133" y="166" width="1" height="1" fill="#00ff00"/><rect x="134" y="166" width="1" height="1" fill="#00ff00"/><rect x="135" y="166" width="1" height="1" fill="#00ff00"/><rect x="136" y="166" width="1" height="1" fill="#00ff00"/><rect x="137" y="166" width="1" height="1" fill="#00ff00"/><rect x="138" y="165" width="1" height="2" fill="#00ff00"/><rect x="139" y="165" width="1" height="2" fill="#00ff00"/><rect x="140" y="165" width="1" height="2" fill="#00ff00"/><rect x="141" y="165" width="1" height="1" fill="#00ff00"/><rect x="142" y="165" width="1" height="1" fill="#00ff00"/><rect x="143" y="165" width="1" height="1" fill="#00ff00"/><rect x="144" y="165" width="1" height="1" fill="#00ff00"/><rect x="145" y="165" width="1" height="1" fill="#00ff00"/><rect x="146" y="165" width="1" height="1" fill="#00ff00"/><rect x="147" y="165" width="1" height="1" fill="#00ff00"/><rect x="148" y="164" width="1" height="2" fill="#00ff00"/><rect x="149" y="164" width="1" height="2" fill="#00ff00"/><rect x="150" y="164" width="1" height="1" fill="#00ff00"/><rect x="151" y="164" width="1" height="1" fill="#00ff00"/><rect x="152" y="164" width="1" height="1" fill="#00ff00"/><rect x="153" y="164" width="1" height="1" fill="#00ff00"/><rect x="154" y="164" width="1" height="1" fill="#00ff00"/><rect x="155" y="164" width="1" height="1" fill="#00ff00"/><rect x="156" y="164" width="1" height="1" fill="#00ff00"/><rect x="157" y="163" width="1" height="2" fill="#00ff00"/><rect x="158" y="163" width="1" height="2" fill="#00ff00"/><rect x="159" y="163" width="1" height="2" fill="#00ff00"/><rect x="160" y="163" width="1" height="1" fill="#00ff00"/><rect x="161" y="163" width="1" height="1" fill="#00ff00"/><rect x="162" y="163" width="1" height="1" fill="#00ff00"/><rect x="163" y="163" width="1" height="1" fill="#00ff00"/><rect x="164" y="163" width="1" height="1" fill="#00ff00"/><rect x="165" y="163" width="1" height="1" fill="#00ff00"/><rect x="166" y="163" width="1" height="1" fill="#00ff00"/><rect x="167" y="162" width="1" height="2" fill="#00ff00"/><rect x="168" y="162" width="1" height="2" fill="#00ff00"/><rect x="169" y="162" width="1" height="2" fill="#00ff00"/><rect x="170" y="162" width="1" height="1" fill="#00ff00"/><rect x="171" y="162" width="1" height="1" fill="#00ff00"/><rect x="172" y="162" width="1" height="1" fill="#00ff00"/><rect x="173" y="162" width="1" height="1" fill="#00ff00"/><rect x="174" y="162" width="1" height="1" fill="#00ff00"/><rect x="175" y="162" width="1" height="1" fill="#00ff00"/><rect x="176" y="162" width="1" height="1" fill="#00ff00"/><rect x="177" y="161" width="1" height="2" fill="#00ff00"/><rect x="178" y="161" width="1" height="2" fill="#00ff00"/><rect x="179" y="161" width="1" height="2" fill="#00ff00"/><rect x="180" y="161" width="1" height="1" fill="#00ff00"/><rect x="181" y="161" width="1" height="1" fill="#00ff00"/><rect x="182" y="161" width="1" height="1" fill="#00ff00"/><rect x="183" y="161" width="1" height="1" fill="#00ff00"/><rect x="184" y="161" width="1" height="1" fill="#00ff00"/><rect x="185" y="161" width="1" height="1" fill="#00ff00"/><rect x="186" y="161" width="1" height="1" fill="#00ff00"/><rect x="187" y="161" width="1" height="1" fill="#00ff00"/><rect x="188" y="160" width="1" height="2" fill="#00ff00"/><rect x="189" y="160" width="1" height="2" fill="#00ff00"/><rect x="190" y="160" width="1" height="1" fill="#00ff00"/><rect x="191" y="160" width="1" height="1" fill="#00ff00"/><rect x="192" y="160" width="1" height="1" fill="#00ff00"/><rect x="193" y="160" width="1" height="1" fill="#00ff00"/><rect x="194" y="160" width="1" height="1" fill="#00ff00"/><rect x="195" y="160" width="1" height="1" fill="#00ff00"/><rect x="196" y="160" width="1" height="1" fill="#00ff00"/><rect x="197" y="160" width="1" height="1" fill="#00ff00"/><rect x="198" y="159" width="1" height="2" fill="#00ff00"/><rect x="199" y="159" width="1" height="2" fill="#00ff00"/><rect x="200" y="159" width="1" height="2" fill="#00ff00"/><rect x="201" y="159" width="1" height="1" fill="#00ff00"/><rect x="202" y="159" width="1" height="1" fill="#00ff00"/><rect x="203" y="159" width="1" height="1" fill="#00ff00"/><rect x="204" y="159" width="1" height="1" fill="#00ff00"/><rect x="205" y="159" width="1" height="1" fill="#00ff00"/><rect x="206" y="159" width="1" height="1" fill="#00ff00"/><rect x="207" y="159" width="1" height="1" fill="#00ff00"/><rect x="208" y="159" width="1" height="1" fill="#00ff00"/><rect x="209" y="158" width="1" height="2" fill="#00ff00"/><rect x="210" y="158" width="1" height="2" fill="#00ff00"/><rect x="211" y="158" width="1" height="2" fill="#00ff00"/><rect x="212" y="158" width="1" height="1" fill="#00ff00"/><rect x="213" y="158" width="1" height="1" fill="#00ff00"/><rect x="214" y="158" width="1" height="1" fill="#00ff00"/><rect x="215" y="158" width="1" height="1" fill="#00ff00"/><rect x="216" y="158" width="1" height="1" fill="#00ff00"/><rect x="217" y="158" width="1" height="1" fill="#00ff00"/><rect x="218" y="158" width="1" height="1" fill="#00ff00"/><rect x="219" y="158" width="1" height="1" fill="#00ff00"/><rect x="220" y="157" width="1" height="2" fill="#00ff00"/><rect x="221" y="157" width="1" height="2" fill="#00ff00"/><rect x="222" y="157" width="1" height="2" fill="#00ff00"/><rect x="223" y="157" width="1" height="1" fill="#00ff00"/><rect x="224" y="157" width="1" height="1" fill="#00ff00"/><rect x="225" y="157" width="1" height="1" fill="#00ff00"/><rect x="226" y="157" width="1" height="1" fill="#00ff00"/><rect x="227" y="157" width="1" height="1" fill="#00ff00"/><rect x="228" y="157" width="1" height="1" fill="#00ff00"/><rect x="229" y="157" width="1" height="1" fill="#00ff00"/><rect x="230" y="157" width="1" height="1" fill="#00ff00"/><rect x="231" y="157" width="1" height="1" fill="#00ff00"/><rect x="232" y="156" width="1" height="2" fill="#00ff00"/><rect x="233" y="156" width="1" height="2" fill="#00ff00"/><rect x="234" y="156" width="1" height="1" fill="#00ff00"/><rect x="235" y="156" width="1" height="1" fill="#00ff00"/><rect x="236" y="156" width="1" height="1" fill="#00ff00"/><rect x="237" y="156" width="1" height="1" fill="#00ff00"/><rect x="238" y="156" width="1" height="1" fill="#00ff00"/><rect x="239" y="156" width="1" height="1" fill="#00ff00"/><rect x="240" y="156" width="1" height="1" fill="#00ff00"/><rect x="241" y="156" width="1" height="1" fill="#00ff00"/><rect x="242" y="156" width="1" height="1" fill="#00ff00"/><rect x="243" y="155" width="1" height="2" fill="#00ff00"/><rect x="244" y="155" width="1" height="2" fill="#00ff00"/><rect x="245" y="155" width="1" height="2" fill="#00ff00"/><rect x="246" y="155" width="1" height="1" fill="#00ff00"/><rect x="247" y="155" width="1" height="1" fill="#00ff00"/><rect x="248" y="155" width="1" height="1" fill="#00ff00"/><rect x="249" y="155" width="1" height="1" fill="#00ff00"/><rect x="250" y="155" width="1" height="1" fill="#00ff00"/><rect x="251" y="155" width="1" height="1" fill="#00ff00"/><rect x="252" y="155" width="1" height="1" fill="#00ff00"/><rect x="253" y="155" width="1" height="1" fill="#00ff00"/><rect x="254" y="155" width="1" height="1" fill="#00ff00"/><rect x="255" y="154" width="1" height="2" fill="#00ff00"/><rect x="256" y="154" width="1" height="2" fill="#00ff00"/><rect x="257" y="154" width="1" height="2" fill="#00ff00"/><rect x="258" y="154" width="1" height="1" fill="#00ff00"/><rect x="259" y="154" width="1" height="1" fill="#00ff00"/><rect x="260" y="154" width="1" height="1" fill="#00ff00"/><rect x="261" y="154" width="1" height="1" fill="#00ff00"/><rect x="262" y="154" width="1" height="1" fill="#00ff00"/><rect x="263" y="154" width="1" height="1" fill="#00ff00"/><rect x="264" y="154" width="1" height="1" fill="#00ff00"/><rect x="265" y="154" width="1" height="1" fill="#00ff00"/><rect x="266" y="154" width="1" height="1" fill="#00ff00"/><rect x="267" y="153" width="1" height="2" fill="#00ff00"/><rect x="268" y="153" width="1" height="2" fill="#00ff00"/><rect x="269" y="153" width="1" height="2" fill="#00ff00"/><rect x="270" y="153" width="1" height="1" fill="#00ff00"/><rect x="271" y="153" width="1" height="1" fill="#00ff00"/><rect x="272" y="153" width="1" height="1" fill="#00ff00"/><rect x="273" y="153" width="1" height="1" fill="#00ff00"/><rect x="274" y="153" width="1" height="1" fill="#00ff00"/><rect x="275" y="153" width="1" height="1" fill="#00ff00"/><rect x="276" y="153" width="1" height="1" fill="#00ff00"/><rect x="277" y="153" width="1" height="1" fill="#00ff00"/><rect x="278" y="153" width="1" height="1" fill="#00ff00"/><rect x="279" y="152" width="1" height="2" fill="#00ff00"/><rect x="280" y="152" width="1" height="2" fill="#00ff00"/><rect x="281" y="152" width="1" height="2" fill="#00ff00"/><rect x="282" y="152" width="1" height="1" fill="#00ff00"/><rect x="283" y="152" width="1" height="1" fill="#00ff00"/><rect x="284" y="152" width="1" height="1" fill="#00ff00"/><rect x="285" y="152" width="1" height="1" fill="#00ff00"/><rect x="286" y="152" width="1" height="1" fill="#00ff00"/><rect x="287" y="152" width="1" height="1" fill="#00ff00"/><rect x="288" y="152" width="1" height="1" fill="#00ff00"/><rect x="289" y="152" width="1" height="1" fill="#00ff00"/><rect x="290" y="152" width="1" height="1" fill="#00ff00"/><rect x="291" y="152" width="1" height="1" fill="#00ff00"/><rect x="292" y="151" width="1" height="2" fill="#00ff00"/><rect x="293" y="151" width="1" height="2" fill="#00ff00"/><rect x="294" y="151" width="1" height="2" fill="#00ff00"/><rect x="295" y="151" width="1" height="1" fill="#00ff00"/><rect x="296" y="151" width="1" height="1" fill="#00ff00"/><rect x="297" y="151" width="1" height="1" fill="#00ff00"/><rect x="298" y="151" width="1" height="1" fill="#00ff00"/><rect x="299" y="151" width="1" height="1" fill="#00ff00"/><rect x="300" y="151" width="1" height="1" fill="#00ff00"/><rect x="301" y="151" width="1" height="1" fill="#00ff00"/><rect x="302" y="151" width="1" height="1" fill="#00ff00"/><rect x="303" y="151" width="1" height="1" fill="#00ff00"/><rect x="304" y="151" width="1" height="1" fill="#00ff00"/><rect x="305" y="150" width="1" height="2" fill="#00ff00"/><rect x="306" y="150" width="1" height="2" fill="#00ff00"/><rect x="307" y="150" width="1" height="2" fill="#00ff00"/><rect x="308" y="150" width="1" height="1" fill="#00ff00"/><rect x="309" y="150" width="1" height="1" fill="#00ff00"/><rect x="310" y="150" width="1" height="1" fill="#00ff00"/><rect x="311" y="150" width="1" height="1" fill="#00ff00"/><rect x="312" y="150" width="1" height="1" fill="#00ff00"/><rect x="313" y="150" width="1" height="1" fill="#00ff00"/><rect x="314" y="150" width="1" height="1" fill="#00ff00"/><rect x="315" y="150" width="1" height="1" fill="#00ff00"/><rect x="316" y="150" width="1" height="1" fill="#00ff00"/><rect x="317" y="150" width="1" height="1" fill="#00ff00"/><rect x="318" y="149" width="1" height="2" fill="#00ff00"/><rect x="319" y="149" width="1" height="2" fill="#00ff00"/><rect x="320" y="149" width="1" height="2" fill="#00ff00"/><rect x="321" y="149" width="1" height="1" fill="#00ff00"/><rect x="322" y="149" width="1" height="1" fill="#00ff00"/><rect x="323" y="149" width="1" height="1" fill="#00ff00"/><rect x="324" y="149" width="1" height="1" fill="#00ff00"/><rect x="325" y="149" width="1" height="1" fill="#00ff00"/><rect x="326" y="149" width="1" height="1" fill="#00ff00"/><rect x="327" y="149" width="1" height="1" fill="#00ff00"/><rect x="328" y="149" width="1" height="1" fill="#00ff00"/><rect x="329" y="149" width="1" height="1" fill="#00ff00"/><rect x="330" y="149" width="1" height="1" fill="#00ff00"/><rect x="331" y="148" width="1" height="2" fill="#00ff00"/><rect x="332" y="148" width="1" height="2" fill="#00ff00"/><rect x="333" y="148" width="1" height="2" fill="#00ff00"/><rect x="334" y="148" width="1" height="1" fill="#00ff00"/><rect x="335" y="148" width="1" height="1" fill="#00ff00"/><rect x="336" y="148" width="1" height="1" fill="#00ff00"/><rect x="337" y="148" width="1" height="1" fill="#00ff00"/><rect x="338" y="148" width="1" height="1" fill="#00ff00"/><rect x="339" y="148" width="1" height="1" fill="#00ff00"/><rect x="340" y="148" width="1" height="1" fill="#00ff00"/><rect x="341" y="148" width="1" height="1" fill="#00ff00"/><rect x="342" y="148" width="1" height="1" fill="#00ff00"/><rect x="343" y="148" width="1" height="1" fill="#00ff00"/><rect x="344" y="148" width="1" height="1" fill="#00ff00"/><rect x="345" y="147" width="1" height="2" fill="#00ff00"/><rect x="346" y="147" width="1" height="2" fill="#00ff00"/><rect x="347" y="147" width="1" height="2" fill="#00ff00"/><rect x="348" y="147" width="1" height="1" fill="#00ff00"/><rect x="349" y="147" width="1" height="1" fill="#00ff00"/><rect x="350" y="147" width="1" height="1" fill="#00ff00"/><rect x="351" y="147" width="1" height="1" fill="#00ff00"/><rect x="352" y="147" width="1" height="1" fill="#00ff00"/><rect x="353" y="147" width="1" height="1" fill="#00ff00"/><rect x="354" y="147" width="1" height="1" fill="#00ff00"/><rect x="355" y="147" width="1" height="1" fill="#00ff00"/><rect x="356" y="147" width="1" height="1" fill="#00ff00"/><rect x="357" y="147" width="1" height="1" fill="#00ff00"/><rect x="358" y="146" width="1" height="2" fill="#00ff00"/><rect x="359" y="146" width="1" height="2" fill="#00ff00"/><rect x="360" y="146" width="1" height="2" fill="#00ff00"/><rect x="361" y="146" width="1" height="2" fill="#00ff00"/><rect x="362" y="146" width="1" height="1" fill="#00ff00"/><rect x="363" y="146" width="1" height="1" fill="#00ff00"/><rect x="364" y="146" width="1" height="1" fill="#00ff00"/><rect x="365" y="146" width="1" height="1" fill="#00ff00"/><rect x="366" y="146" width="1" height="1" fill="#00ff00"/><rect x="367" y="146" width="1" height="1" fill="#00ff00"/><rect x="368" y="146" width="1" height="1" fill="#00ff00"/><rect x="369" y="146" width="1" height="1" fill="#00ff00"/><rect x="370" y="146" width="1" height="1" fill="#00ff00"/><rect x="371" y="146" width="1" height="1" fill="#00ff00"/><rect x="372" y="145" width="1" height="2" fill="#00ff00"/><rect x="373" y="145" width="1" height="2" fill="#00ff00"/><rect x="374" y="145" width="1" height="2" fill="#00ff00"/><rect x="375" y="145" width="1" height="2" fill="#00ff00"/><rect x="376" y="145" width="1" height="1" fill="#00ff00"/><rect x="377" y="145" width="1" height="1" fill="#00ff00"/><rect x="378" y="145" width="1" height="1" fill="#00ff00"/><rect x="379" y="145" width="1" height="1" fill="#00ff00"/><rect x="380" y="145" width="1" height="1" fill="#00ff00"/><rect x="381" y="145" width="1" height="1" fill="#00ff00"/><rect x="382" y="145" width="1" height="1" fill="#00ff00"/><rect x="383" y="145" width="1" height="1" fill="#00ff00"/><rect x="384" y="145" width="1" height="1" fill="#00ff00"/><rect x="385" y="145" width="1" height="1" fill="#00ff00"/><rect x="386" y="145" width="1" height="1" fill="#00ff00"/><rect x="387" y="144" width="1" height="2" fill="#00ff00"/><rect x="388" y="144" width="1" height="2" fill="#00ff00"/><rect x="389" y="144" width="1" height="2" fill="#00ff00"/><rect x="390" y="144" width="1" height="1" fill="#00ff00"/><rect x="391" y="144" width="1" height="1" fill="#00ff00"/><rect x="392" y="144" width="1" height="1" fill="#00ff00"/><rect x="393" y="144" width="1" height="1" fill="#00ff00"/><rect x="394" y="144" width="1" height="1" fill="#00ff00"/><rect x="395" y="144" width="1" height="1" fill="#00ff00"/><rect x="396" y="144" width="1" height="1" fill="#00ff00"/><rect x="397" y="144" width="1" height="1" fill="#00ff00"/><rect x="398" y="144" width="1" height="1" fill="#00ff00"/><rect x="399" y="144" width="1" height="1" fill="#00ff00"/><rect x="400" y="144" width="1" height="1" fill="#00ff00"/><rect x="401" y="143" width="1" height="2" fill="#00ff00"/><rect x="402" y="143" width="1" height="2" fill="#00ff00"/><rect x="403" y="143" width="1" height="2" fill="#00ff00"/><rect x="404" y="143" width="1" height="2" fill="#00ff00"/><rect x="405" y="143" width="1" height="1" fill="#00ff00"/><rect x="406" y="143" width="1" height="1" fill="#00ff00"/><rect x="407" y="143" width="1" height="1" fill="#00ff00"/><rect x="408" y="143" width="1" height="1" fill="#00ff00"/><rect x="409" y="143" width="1" height="1" fill="#00ff00"/><rect x="410" y="143" width="1" height="1" fill="#00ff00"/><rect x="411" y="143" width="1" height="1" fill="#00ff00"/><rect x="412" y="143" width="1" height="1" fill="#00ff00"/><rect x="413" y="143" width="1" height="1" fill="#00ff00"/><rect x="414" y="143" width="1" height="1" fill="#00ff00"/><rect x="415" y="143" width="1" height="1" fill="#00ff00"/><rect x="416" y="142" width="1" height="2" fill="#00ff00"/><rect x="417" y="142" width="1" height="2" fill="#00ff00"/><rect x="418" y="142" width="1" height="2" fill="#00ff00"/><rect x="419" y="142" width="1" height="1" fill="#00ff00"/><rect x="420" y="142" width="1" height="1" fill="#00ff00"/><rect x="421" y="142" width="1" height="1" fill="#00ff00"/><rect x="422" y="142" width="1" height="1" fill="#00ff00"/><rect x="423" y="142" width="1" height="1" fill="#00ff00"/><rect x="424" y="142" width="1" height="1" fill="#00ff00"/><rect x="425" y="142" width="1" height="1" fill="#00ff00"/><rect x="426" y="142" width="1" height="1" fill="#00ff00"/><rect x="427" y="142" width="1" height="1" fill="#00ff00"/><rect x="428" y="142" width="1" height="1" fill="#00ff00"/><rect x="429" y="142" width="1" height="1" fill="#00ff00"/><rect x="430" y="142" width="1" height="1" fill="#00ff00"/><rect x="431" y="141" width="1" height="2" fill="#00ff00"/><rect x="432" y="141" width="1" height="2" fill="#00ff00"/><rect x="433" y="141" width="1" height="2" fill="#00ff00"/><rect x="434" y="141" width="1" height="1" fill="#00ff00"/><rect x="435" y="141" width="1" height="1" fill="#00ff00"/><rect x="436" y="141" width="1" height="1" fill="#00ff00"/><rect x="437" y="141" width="1" height="1" fill="#00ff00"/><rect x="438" y="141" width="1" height="1" fill="#00ff00"/><rect x="439" y="141" width="1" height="1" fill="#00ff00"/><rect x="440" y="141" width="1" height="1" fill="#00ff00"/><rect x="441" y="141" width="1" height="1" fill="#00ff00"/><rect x="442" y="141" width="1" height="1" fill="#00ff00"/><rect x="443" y="141" width="1" height="1" fill="#00ff00"/><rect x="444" y="141" width="1" height="1" fill="#00ff00"/><rect x="445" y="141" width="1" height="1" fill="#00ff00"/><rect x="446" y="140" width="1" height="2" fill="#00ff00"/><rect x="447" y="140" width="1" height="2" fill="#00ff00"/><rect x="448" y="140" width="1" height="2" fill="#00ff00"/><rect x="449" y="140" width="1" height="2" fill="#00ff00"/><rect x="450" y="140" width="1" height="1" fill="#00ff00"/><rect x="451" y="140" width="1" height="1" fill="#00ff00"/><rect x="452" y="140" width="1" height="1" fill="#00ff00"/><rect x="453" y="140" width="1" height="1" fill="#00ff00"/><rect x="454" y="140" width="1" height="1" fill="#00ff00"/><rect x="455" y="140" width="1" height="1" fill="#00ff00"/><rect x="456" y="140" width="1" height="1" fill="#00ff00"/><rect x="457" y="140" width="1" height="1" fill="#00ff00"/><rect x="458" y="140" width="1" height="1" fill="#00ff00"/><rect x="459" y="140" width="1" height="1" fill="#00ff00"/><rect x="460" y="140" width="1" height="1" fill="#00ff00"/><rect x="461" y="139" width="1" height="2" fill="#00ff00"/><rect x="462" y="139" width="1" height="2" fill="#00ff00"/><rect x="463" y="139" width="1" height="2" fill="#00ff00"/><rect x="464" y="139" width="1" height="2" fill="#00ff00"/><rect x="465" y="139" width="1" height="1" fill="#00ff00"/><rect x="466" y="139" width="1" height="1" fill="#00ff00"/><rect x="467" y="139" width="1" height="1" fill="#00ff00"/><rect x="468" y="139" width="1" height="1" fill="#00ff00"/><rect x="469" y="139" width="1" height="1" fill="#00ff00"/><rect x="470" y="139" width="1" height="1" fill="#00ff00"/><rect x="471" y="139" width="1" height="1" fill="#00ff00"/><rect x="472" y="139" width="1" height="1" fill="#00ff00"/><rect x="473" y="139" width="1" height="1" fill="#00ff00"/><rect x="474" y="139" width="1" height="1" fill="#00ff00"/><rect x="475" y="139" width="1" height="1" fill="#00ff00"/><rect x="476" y="139" width="1" height="1" fill="#00ff00"/><rect x="477" y="138" width="1" height="2" fill="#00ff00"/><rect x="478" y="138" width="1" height="2" fill="#00ff00"/><rect x="479" y="138" width="1" height="2" fill="#00ff00"/><rect x="480" y="138" width="1" height="2" fill="#00ff00"/><rect x="481" y="138" width="1" height="1" fill="#00ff00"/><rect x="482" y="138" width="1" height="1" fill="#00ff00"/><rect x="483" y="138" width="1" height="1" fill="#00ff00"/><rect x="484" y="138" width="1" height="1" fill="#00ff00"/><rect x="485" y="138" width="1" height="1" fill="#00ff00"/><rect x="486" y="138" width="1" height="1" fill="#00ff00"/><rect x="487" y="138" width="1" height="1" fill="#00ff00"/><rect x="488" y="138" width="1" height="1" fill="#00ff00"/><rect x="489" y="138" width="1" height="1" fill="#00ff00"/><rect x="490" y="138" width="1" height="1" fill="#00ff00"/><rect x="491" y="138" width="1" height="1" fill="#00ff00"/><rect x="492" y="138" width="1" height="1" fill="#00ff00"/><rect x="493" y="137" width="1" height="2" fill="#00ff00"/><rect x="494" y="137" width="1" height="2" fill="#00ff00"/><rect x="495" y="137" width="1" height="2" fill="#00ff00"/><rect x="496" y="137" width="1" height="2" fill="#00ff00"/><rect x="497" y="137" width="1" height="1" fill="#00ff00"/><rect x="498" y="137" width="1" height="1" fill="#00ff00"/><rect x="499" y="137" width="1" height="1" fill="#00ff00"/><rect x="500" y="137" width="1" height="1" fill="#00ff00"/><rect x="501" y="137" width="1" height="1" fill="#00ff00"/><rect x="502" y="137" width="1" height="1" fill="#00ff00"/><rect x="503" y="137" width="1" height="1" fill="#00ff00"/><rect x="504" y="137" width="1" height="1" fill="#00ff00"/><rect x="505" y="137" width="1" height="1" fill="#00ff00"/><rect x="506" y="137" width="1" height="1" fill="#00ff00"/><rect x="507" y="137" width="1" height="1" fill="#00ff00"/><rect x="508" y="137" width="1" height="1" fill="#00ff00"/><rect x="509" y="136" width="1" height="2" fill="#00ff00"/><rect x="510" y="136" width="1" height="2" fill="#00ff00"/><rect x="511" y="136" width="1" height="2" fill="#00ff00"/><rect x="512" y="136" width="1" height="2" fill="#00ff00"/><rect x="513" y="136" width="1" height="1" fill="#00ff00"/><rect x="514" y="136" width="1" height="1" fill="#00ff00"/><rect x="75" y="173" width="1" height="28" fill="#00ff00"/><rect x="61" y="223" width="470" height="132" fill="#008000"/><rect x="72" y="223" width="1" height="132" fill="#000080"/><rect x="82" y="223" width="1" height="132" fill="#000080"/><rect x="93" y="223" width="1" height="132" fill="#000080"/><rect x="103" y="223" width="1" height="132" fill="#000080"/><rect x="113" y="223" width="1" height="132" fill="#0000ff"/><rect x="124" y="223" width="1" height="132" fill="#000080"/><rect x="134" y="223" width="1" height="132" fill="#000080"/><rect x="144" y="223" width="1" height="132" fill="#000080"/><rect x="155" y="223" width="1" height="132" fill="#000080"/><rect x="165" y="223" width="1" height="132" fill="#0000ff"/><rect x="176" y="223" width="1" height="132" fill="#000080"/><rect x="186" y="223" width="1" height="132" fill="#000080"/><rect x="196" y="223" width="1" height="132" fill="#000080"/><rect x="207" y="223" width="1" height="132" fill="#000080"/><rect x="217" y="223" width="1" height="132" fill="#0000ff"/><rect x="228" y="223" width="1" height="132" fill="#000080"/><rect x="238" y="223" width="1" height="132" fill="#000080"/><rect x="248" y="223" width="1" height="132" fill="#000080"/><rect x="259" y="223" width="1" height="132" fill="#000080"/><rect x="269" y="223" width="1" height="132" fill="#0000ff"/><rect x="279" y="223" width="1" height="132" fill="#000080"/><rect x="290" y="223" width="1" height="132" fill="#000080"/><rect x="300" y="223" width="1" height="132" fill="#000080"/><rect x="311" y="223" width="1" height="132" fill="#000080"/><rect x="321" y="223" width="1" height="132" fill="#0000ff"/><rect x="331" y="223" width="1" height="132" fill="#000080"/><rect x="342" y="223" width="1" height="132" fill="#000080"/><rect x="352" y="223" width="1" height="132" fill="#000080"/><rect x="363" y="223" width="1" height="132" fill="#000080"/><rect x="373" y="223" width="1" height="132" fill="#0000ff"/><rect x="383" y="223" width="1" height="132" fill="#000080"/><rect x="394" y="223" width="1" height="132" fill="#000080"/><rect x="404" y="223" width="1" height="132" fill="#000080"/><rect x="414" y="223" width="1" height="132" fill="#000080"/><rect x="425" y="223" width="1" height="132" fill="#0000ff"/><rect x="435" y="223" width="1" height="132" fill="#000080"/><rect x="446" y="223" width="1" height="132" fill="#000080"/><rect x="456" y="223" width="1" height="132" fill="#000080"/><rect x="466" y="223" width="1" height="132" fill="#000080"/><rect x="477" y="223" width="1" height="132" fill="#0000ff"/><rect x="487" y="223" width="1" height="132" fill="#000080"/><rect x="498" y="223" width="1" height="132" fill="#000080"/><rect x="508" y="223" width="1" height="132" fill="#000080"/><rect x="518" y="223" width="1" height="132" fill="#000080"/><rect x="61" y="354" width="468" height="1" fill="#0000ff"/><rect x="61" y="341" width="468" height="1" fill="#000080"/><rect x="61" y="328" width="468" height="1" fill="#0000ff"/><rect x="61" y="315" width="468" height="1" fill="#000080"/><rect x="61" y="302" width="468" height="1" fill="#0000ff"/><rect x="61" y="289" width="468" height="1" fill="#000080"/><rect x="61" y="276" width="468" height="1" fill="#0000ff"/><rect x="61" y="263" width="468" height="1" fill="#000080"/><rect x="61" y="250" width="468" height="1" fill="#0000ff"/><rect x="61" y="237" width="468" height="1" fill="#000080"/><rect x="61" y="223" width="468" height="1" fill="#0000ff"/><rect x="61" y="223" width="1" height="132" fill="#000"/><rect x="59" y="354" width="2" height="1" fill="#0000ff"/><rect x="60" y="341" width="1" height="1" fill="#0000ff"/><rect x="59" y="328" width="2" height="1" fill="#0000ff"/><rect x="60" y="315" width="1" height="1" fill="#0000ff"/><rect x="59" y="302" width="2" height="1" fill="#0000ff"/><rect x="60" y="289" width="1" height="1" fill="#0000ff"/><rect x="59" y="276" width="2" height="1" fill="#0000ff"/><rect x="60" y="263" width="1" height="1" fill="#0000ff"/><rect x="59" y="250" width="2" height="1" fill="#0000ff"/><rect x="60" y="237" width="1" height="1" fill="#0000ff"/><rect x="59" y="223" width="2" height="1" fill="#0000ff"/><rect x="86" y="315" width="1" height="40" fill="#ffff00"/><rect x="96" y="302" width="1" height="53" fill="#ffff00"/><rect x="100" y="328" width="1" height="27" fill="#ffff00"/><rect x="117" y="302" width="1" height="53" fill="#ffff00"/><rect x="123" y="315" width="1" height="40" fill="#ffff00"/><rect x="166" y="315" width="1" height="40" fill="#ffff00"/><rect x="177" y="302" width="1" height="53" fill="#ffff00"/><rect x="183" y="315" width="1" height="40" fill="#ffff00"/><rect x="189" y="315" width="1" height="40" fill="#ffff00"/><rect x="212" y="341" width="1" height="14" fill="#ffff00"/><rect x="228" y="341" width="1" height="14" fill="#ffff00"/><rect x="265" y="341" width="1" height="14" fill="#ffff00"/><rect x="278" y="341" width="1" height="14" fill="#ffff00"/><rect x="286" y="315" width="1" height="40" fill="#ffff00"/><rect x="304" y="341" width="1" height="14" fill="#ffff00"/><rect x="364" y="341" width="1" height="14" fill="#ffff00"/><rect x="383" y="341" width="1" height="14" fill="#ffff00"/><rect x="409" y="328" width="1" height="27" fill="#ffff00"/><rect x="427" y="328" width="1" height="27" fill="#ffff00"/><rect x="433" y="328" width="1" height="27" fill="#ffff00"/><rect x="451" y="341" width="1" height="14" fill="#ffff00"/><rect x="484" y="341" width="1" height="14" fill="#ffff00"/><rect x="485" y="328" width="1" height="27" fill="#ffff00"/><rect x="486" y="315" width="1" height="40" fill="#ffff00"/><rect x="490" y="315" width="1" height="40" fill="#ffff00"/><rect x="500" y="315" width="1" height="40" fill="#ffff00"/><rect x="501" y="315" width="1" height="40" fill="#ffff00"/><rect x="507" y="302" width="1" height="53" fill="#ffff00"/><rect x="508" y="302" width="1" height="53" fill="#ffff00"/><rect x="509" y="328" width="1" height="27" fill="#ffff00"/><rect x="512" y="302" width="1" height="53" fill="#ffff00"/><rect x="513" y="302" width="1" height="53" fill="#ffff00"/><rect x="516" y="223" width="1" height="131" fill="#c0c0c0"/><rect x="62" y="298" width="1" height="1" fill="#ff00ff"/><rect x="63" y="289" width="1" height="10" fill="#ff00ff"/><rect x="64" y="289" width="1" height="4" fill="#ff00ff"/><rect x="65" y="288" width="1" height="5" fill="#ff00ff"/><rect x="66" y="288" width="1" height="4" fill="#ff00ff"/><rect x="67" y="291" width="1" height="1" fill="#ff00ff"/><rect x="68" y="289" width="1" height="3" fill="#ff00ff"/><rect x="69" y="289" width="1" height="5" fill="#ff00ff"/><rect x="70" y="289" width="1" height="5" fill="#ff00ff"/><rect x="71" y="288" width="1" height="2" fill="#ff00ff"/><rect x="72" y="288" width="1" height="5" fill="#ff00ff"/><rect x="73" y="288" width="1" height="5" fill="#ff00ff"/><rect x="74" y="288" width="1" height="3" fill="#ff00ff"/><rect x="75" y="290" width="1" height="1" fill="#ff00ff"/><rect x="76" y="290" width="1" height="4" fill="#ff00ff"/><rect x="77" y="293" width="1" height="2" fill="#ff00ff"/><rect x="78" y="291" width="1" height="4" fill="#ff00ff"/><rect x="79" y="291" width="1" height="2" fill="#ff00ff"/><rect x="80" y="291" width="1" height="2" fill="#ff00ff"/><rect x="81" y="291" width="1" height="1" fill="#ff00ff"/><rect x="82" y="291" width="1" height="1" fill="#ff00ff"/><rect x="83" y="289" width="1" height="3" fill="#ff00ff"/><rect x="84" y="289" width="1" height="1" fill="#ff00ff"/><rect x="85" y="289" width="1" height="5" fill="#ff00ff"/><rect x="86" y="292" width="1" height="2" fill="#ff00ff"/><rect x="87" y="290" width="1" height="3" fill="#ff00ff"/><rect x="88" y="290" width="1" height="1" fill="#ff00ff"/><rect x="89" y="290" width="1" height="2" fill="#ff00ff"/><rect x="90" y="291" width="1" height="1" fill="#ff00ff"/><rect x="91" y="291" width="1" height="6" fill="#ff00ff"/><rect x="92" y="293" width="1" height="4" fill="#ff00ff"/><rect x="93" y="289" width="1" height="5" fill="#ff00ff"/><rect x="94" y="289" width="1" height="2" fill="#ff00ff"/><rect x="95" y="290" width="1" height="4" fill="#ff00ff"/><rect x="96" y="293" width="1" height="1" fill="#ff00ff"/><rect x="97" y="291" width="1" height="3" fill="#ff00ff"/><rect x="98" y="291" width="1" height="2" fill="#ff00ff"/><rect x="99" y="290" width="1" height="3" fill="#ff00ff"/><rect x="100" y="290" width="1" height="6" fill="#ff00ff"/><rect x="101" y="293" width="1" height="3" fill="#ff00ff"/><rect x="102" y="290" width="1" height="4" fill="#ff00ff"/><rect x="103" y="290" width="1" height="4" fill="#ff00ff"/><rect x="104" y="293" width="1" height="3" fill="#ff00ff"/><rect x="105" y="292" width="1" height="4" fill="#ff00ff"/><rect x="106" y="292" width="1" height="4" fill="#ff00ff"/><rect x="107" y="294" width="1" height="2" fill="#ff00ff"/><rect x="108" y="294" width="1" height="2" fill="#ff00ff"/><rect x="109" y="295" width="1" height="3" fill="#ff00ff"/><rect x="110" y="297" width="1" height="1" fill="#ff00ff"/><rect x="111" y="296" width="1" height="2" fill="#ff00ff"/><rect x="112" y="296" width="1" height="3" fill="#ff00ff"/><rect x="113" y="294" width="1" height="5" fill="#ff00ff"/><rect x="114" y="294" width="1" height="1" fill="#ff00ff"/><rect x="115" y="293" width="1" height="2" fill="#ff00ff"/><rect x="116" y="293" width="1" height="4" fill="#ff00ff"/><rect x="117" y="296" width="1" height="1" fill="#ff00ff"/><rect x="118" y="296" width="1" height="4" fill="#ff00ff"/><rect x="119" y="294" width="1" height="6" fill="#ff00ff"/><rect x="120" y="294" width="1" height="2" fill="#ff00ff"/><rect x="121" y="295" width="1" height="3" fill="#ff00ff"/><rect x="122" y="296" width="1" height="2" fill="#ff00ff"/><rect x="123" y="295" width="1" height="2" fill="#ff00ff"/><rect x="124" y="295" width="1" height="1" fill="#ff00ff"/><rect x="125" y="295" width="1" height="3" fill="#ff00ff"/><rect x="126" y="294" width="1" height="4" fill="#ff00ff"/><rect x="127" y="287" width="1" height="8" fill="#ff00ff"/><rect x="128" y="287" width="1" height="9" fill="#ff00ff"/><rect x="129" y="294" width="1" height="2" fill="#ff00ff"/><rect x="130" y="293" width="1" height="2" fill="#ff00ff"/><rect x="131" y="293" width="1" height="4" fill="#ff00ff"/><rect x="132" y="296" width="1" height="1" fill="#ff00ff"/><rect x="133" y="296" width="1" height="1" fill="#ff00ff"/><rect x="134" y="296" width="1" height="1" fill="#ff00ff"/><rect x="135" y="296" width="1" height="1" fill="#ff00ff"/><rect x="136" y="296" width="1" height="2" fill="#ff00ff"/><rect x="137" y="297" width="1" height="2" fill="#ff00ff"/><rect x="138" y="294" width="1" height="5" fill="#ff00ff"/><rect x="139" y="294" width="1" height="4" fill="#ff00ff"/><rect x="140" y="295" width="1" height="3" fill="#ff00ff"/><rect x="141" y="295" width="1" height="3" fill="#ff00ff"/><rect x="142" y="294" width="1" height="4" fill="#ff00ff"/><rect x="143" y="293" width="1" height="2" fill="#ff00ff"/><rect x="144" y="293" width="1" height="3" fill="#ff00ff"/><rect x="145" y="295" width="1" height="1" fill="#ff00ff"/><rect x="146" y="295" width="1" height="1" fill="#ff00ff"/><rect x="147" y="295" width="1" height="4" fill="#ff00ff"/><rect x="148" y="294" width="1" height="5" fill="#ff00ff"/><rect x="149" y="294" width="1" height="1" fill="#ff00ff"/><rect x="150" y="292" width="1" height="3" fill="#ff00ff"/><rect x="151" y="292" width="1" height="5" fill="#ff00ff"/><rect x="152" y="296" width="1" height="1" fill="#ff00ff"/><rect x="153" y="296" width="1" height="1" fill="#ff00ff"/><rect x="154" y="293" width="1" height="4" fill="#ff00ff"/><rect x="155" y="293" width="1" height="3" fill="#ff00ff"/><rect x="156" y="295" width="1" height="3" fill="#ff00ff"/><rect x="157" y="296" width="1" height="2" fill="#ff00ff"/><rect x="158" y="294" width="1" height="3" fill="#ff00ff"/><rect x="159" y="294" width="1" height="3" fill="#ff00ff"/><rect x="160" y="296" width="1" height="3" fill="#ff00ff"/><rect x="161" y="297" width="1" height="2" fill="#ff00ff"/><rect x="162" y="293" width="1" height="5" fill="#ff00ff"/><rect x="163" y="293" width="1" height="5" fill="#ff00ff"/><rect x="164" y="297" width="1" height="4" fill="#ff00ff"/><rect x="165" y="290" width="1" height="11" fill="#ff00ff"/><rect x="166" y="290" width="1" height="10" fill="#ff00ff"/><rect x="167" y="297" width="1" height="3" fill="#ff00ff"/><rect x="168" y="297" width="1" height="2" fill="#ff00ff"/><rect x="169" y="294" width="1" height="5" fill="#ff00ff"/><rect x="170" y="294" width="1" height="4" fill="#ff00ff"/><rect x="171" y="297" width="1" height="3" fill="#ff00ff"/><rect x="172" y="289" width="1" height="11" fill="#ff00ff"/><rect x="173" y="289" width="1" height="6" fill="#ff00ff"/><rect x="174" y="294" width="1" height="1" fill="#ff00ff"/><rect x="175" y="294" width="1" height="1" fill="#ff00ff"/><rect x="176" y="294" width="1" height="1" fill="#ff00ff"/><rect x="177" y="294" width="1" height="4" fill="#ff00ff"/><rect x="178" y="297" width="1" height="3" fill="#ff00ff"/><rect x="179" y="297" width="1" height="3" fill="#ff00ff"/><rect x="180" y="291" width="1" height="7" fill="#ff00ff"/><rect x="181" y="291" width="1" height="3" fill="#ff00ff"/><rect x="182" y="293" width="1" height="1" fill="#ff00ff"/><rect x="183" y="293" width="1" height="5" fill="#ff00ff"/><rect x="184" y="294" width="1" height="4" fill="#ff00ff"/><rect x="185" y="294" width="1" height="1" fill="#ff00ff"/><rect x="186" y="294" width="1" height="5" fill="#ff00ff"/><rect x="187" y="296" width="1" height="3" fill="#ff00ff"/><rect x="188" y="294" width="1" height="3" fill="#ff00ff"/><rect x="189" y="294" width="1" height="7" fill="#ff00ff"/><rect x="190" y="298" width="1" height="3" fill="#ff00ff"/><rect x="191" y="293" width="1" height="6" fill="#ff00ff"/><rect x="192" y="293" width="1" height="5" fill="#ff00ff"/><rect x="193" y="292" width="1" height="6" fill="#ff00ff"/><rect x="194" y="292" width="1" height="3" fill="#ff00ff"/><rect x="195" y="293" width="1" height="2" fill="#ff00ff"/><rect x="196" y="293" width="1" height="4" fill="#ff00ff"/><rect x="197" y="296" width="1" height="2" fill="#ff00ff"/><rect x="198" y="293" width="1" height="5" fill="#ff00ff"/><rect x="199" y="293" width="1" height="8" fill="#ff00ff"/><rect x="200" y="293" width="1" height="8" fill="#ff00ff"/><rect x="201" y="293" width="1" height="4" fill="#ff00ff"/><rect x="202" y="294" width="1" height="3" fill="#ff00ff"/><rect x="203" y="294" width="1" height="2" fill="#ff00ff"/><rect x="204" y="295" width="1" height="2" fill="#ff00ff"/><rect x="205" y="293" width="1" height="4" fill="#ff00ff"/><rect x="206" y="293" width="1" height="5" fill="#ff00ff"/><rect x="207" y="297" width="1" height="2" fill="#ff00ff"/><rect x="208" y="295" width="1" height="4" fill="#ff00ff"/><rect x="209" y="293" width="1" height="3" fill="#ff00ff"/><rect x="210" y="293" width="1" height="3" fill="#ff00ff"/><rect x="211" y="293" width="1" height="3" fill="#ff00ff"/><rect x="212" y="293" width="1" height="2" fill="#ff00ff"/><rect x="213" y="292" width="1" height="3" fill="#ff00ff"/><rect x="214" y="292" width="1" height="4" fill="#ff00ff"/><rect x="215" y="292" width="1" height="4" fill="#ff00ff"/><rect x="216" y="292" width="1" height="4" fill="#ff00ff"/><rect x="217" y="295" width="1" height="5" fill="#ff00ff"/><rect x="218" y="295" width="1" height="5" fill="#ff00ff"/><rect x="219" y="295" width="1" height="3" fill="#ff00ff"/><rect x="220" y="297" width="1" height="2" fill="#ff00ff"/><rect x="221" y="297" width="1" height="2" fill="#ff00ff"/><rect x="222" y="296" width="1" height="2" fill="#ff00ff"/><rect x="223" y="294" width="1" height="3" fill="#ff00ff"/><rect x="224" y="294" width="1" height="3" fill="#ff00ff"/><rect x="225" y="296" width="1" height="1" fill="#ff00ff"/><rect x="226" y="296" width="1" height="1" fill="#ff00ff"/><rect x="227" y="296" width="1" height="2" fill="#ff00ff"/><rect x="228" y="295" width="1" height="3" fill="#ff00ff"/><rect x="229" y="293" width="1" height="3" fill="#ff00ff"/><rect x="230" y="293" width="1" height="5" fill="#ff00ff"/><rect x="231" y="295" width="1" height="3" fill="#ff00ff"/><rect x="232" y="295" width="1" height="3" fill="#ff00ff"/><rect x="233" y="296" width="1" height="2" fill="#ff00ff"/><rect x="234" y="296" width="1" height="6" fill="#ff00ff"/><rect x="235" y="294" width="1" height="8" fill="#ff00ff"/><rect x="236" y="294" width="1" height="5" fill="#ff00ff"/><rect x="237" y="297" width="1" height="2" fill="#ff00ff"/><rect x="238" y="297" width="1" height="1" fill="#ff00ff"/><rect x="239" y="294" width="1" height="4" fill="#ff00ff"/><rect x="240" y="294" width="1" height="2" fill="#ff00ff"/><rect x="241" y="295" width="1" height="1" fill="#ff00ff"/><rect x="242" y="295" width="1" height="2" fill="#ff00ff"/><rect x="243" y="294" width="1" height="3" fill="#ff00ff"/><rect x="244" y="294" width="1" height="1" fill="#ff00ff"/><rect x="245" y="294" width="1" height="4" fill="#ff00ff"/><rect x="246" y="295" width="1" height="3" fill="#ff00ff"/><rect x="247" y="295" width="1" height="3" fill="#ff00ff"/><rect x="248" y="295" width="1" height="3" fill="#ff00ff"/><rect x="249" y="295" width="1" height="3" fill="#ff00ff"/><rect x="250" y="297" width="1" height="6" fill="#ff00ff"/><rect x="251" y="296" width="1" height="7" fill="#ff00ff"/><rect x="252" y="296" width="1" height="7" fill="#ff00ff"/><rect x="253" y="295" width="1" height="8" fill="#ff00ff"/><rect x="254" y="295" width="1" height="1" fill="#ff00ff"/><rect x="255" y="295" width="1" height="4" fill="#ff00ff"/><rect x="256" y="297" width="1" height="2" fill="#ff00ff"/><rect x="257" y="294" width="1" height="4" fill="#ff00ff"/><rect x="258" y="294" width="1" height="5" fill="#ff00ff"/><rect x="259" y="298" width="1" height="2" fill="#ff00ff"/><rect x="260" y="296" width="1" height="4" fill="#ff00ff"/><rect x="261" y="296" width="1" height="4" fill="#ff00ff"/><rect x="262" y="296" width="1" height="4" fill="#ff00ff"/><rect x="263" y="295" width="1" height="2" fill="#ff00ff"/><rect x="264" y="295" width="1" height="2" fill="#ff00ff"/><rect x="265" y="296" width="1" height="2" fill="#ff00ff"/><rect x="266" y="297" width="1" height="1" fill="#ff00ff"/><rect x="267" y="295" width="1" height="3" fill="#ff00ff"/><rect x="268" y="295" width="1" height="4" fill="#ff00ff"/><rect x="269" y="294" width="1" height="5" fill="#ff00ff"/><rect x="270" y="292" width="1" height="3" fill="#ff00ff"/><rect x="271" y="292" width="1" height="6" fill="#ff00ff"/><rect x="272" y="297" width="1" height="2" fill="#ff00ff"/><rect x="273" y="296" width="1" height="3" fill="#ff00ff"/><rect x="274" y="294" width="1" height="3" fill="#ff00ff"/><rect x="275" y="294" width="1" height="2" fill="#ff00ff"/><rect x="276" y="292" width="1" height="4" fill="#ff00ff"/><rect x="277" y="292" width="1" height="3" fill="#ff00ff"/><rect x="278" y="294" width="1" height="1" fill="#ff00ff"/><rect x="279" y="294" width="1" height="3" fill="#ff00ff"/><rect x="280" y="296" width="1" height="5" fill="#ff00ff"/><rect x="281" y="297" width="1" height="4" fill="#ff00ff"/><rect x="282" y="294" width="1" height="4" fill="#ff00ff"/><rect x="283" y="294" width="1" height="2" fill="#ff00ff"/><rect x="284" y="293" width="1" height="3" fill="#ff00ff"/><rect x="285" y="293" width="1" height="4" fill="#ff00ff"/><rect x="286" y="295" width="1" height="2" fill="#ff00ff"/><rect x="287" y="295" width="1" height="4" fill="#ff00ff"/><rect x="288" y="296" width="1" height="3" fill="#ff00ff"/><rect x="289" y="296" width="1" height="1" fill="#ff00ff"/><rect x="290" y="296" width="1" height="5" fill="#ff00ff"/><rect x="291" y="294" width="1" height="7" fill="#ff00ff"/><rect x="292" y="294" width="1" height="1" fill="#ff00ff"/><rect x="293" y="294" width="1" height="6" fill="#ff00ff"/><rect x="294" y="296" width="1" height="4" fill="#ff00ff"/><rect x="295" y="296" width="1" height="1" fill="#ff00ff"/><rect x="296" y="296" width="1" height="1" fill="#ff00ff"/><rect x="297" y="293" width="1" height="4" fill="#ff00ff"/><rect x="298" y="293" width="1" height="8" fill="#ff00ff"/><rect x="299" y="298" width="1" height="3" fill="#ff00ff"/><rect x="300" y="294" width="1" height="5" fill="#ff00ff"/><rect x="301" y="290" width="1" height="5" fill="#ff00ff"/><rect x="302" y="290" width="1" height="4" fill="#ff00ff"/><rect x="303" y="293" width="1" height="6" fill="#ff00ff"/><rect x="304" y="295" width="1" height="4" fill="#ff00ff"/><rect x="305" y="295" width="1" height="6" fill="#ff00ff"/><rect x="306" y="295" width="1" height="6" fill="#ff00ff"/><rect x="307" y="294" width="1" height="2" fill="#ff00ff"/><rect x="308" y="294" width="1" height="4" fill="#ff00ff"/><rect x="309" y="295" width="1" height="3" fill="#ff00ff"/><rect x="310" y="295" width="1" height="4" fill="#ff00ff"/><rect x="311" y="298" width="1" height="2" fill="#ff00ff"/><rect x="312" y="292" width="1" height="8" fill="#ff00ff"/><rect x="313" y="292" width="1" height="4" fill="#ff00ff"/><rect x="314" y="295" width="1" height="4" fill="#ff00ff"/><rect x="315" y="298" width="1" height="5" fill="#ff00ff"/><rect x="316" y="295" width="1" height="8" fill="#ff00ff"/><rect x="317" y="291" width="1" height="5" fill="#ff00ff"/><rect x="318" y="291" width="1" height="7" fill="#ff00ff"/><rect x="319" y="297" width="1" height="3" fill="#ff00ff"/><rect x="320" y="295" width="1" height="5" fill="#ff00ff"/><rect x="321" y="295" width="1" height="3" fill="#ff00ff"/><rect x="322" y="294" width="1" height="4" fill="#ff00ff"/><rect x="323" y="293" width="1" height="2" fill="#ff00ff"/><rect x="324" y="293" width="1" height="5" fill="#ff00ff"/><rect x="325" y="295" width="1" height="3" fill="#ff00ff"/><rect x="326" y="295" width="1" height="1" fill="#ff00ff"/><rect x="327" y="294" width="1" height="2" fill="#ff00ff"/><rect x="328" y="294" width="1" height="5" fill="#ff00ff"/><rect x="329" y="298" width="1" height="3" fill="#ff00ff"/><rect x="330" y="296" width="1" height="5" fill="#ff00ff"/><rect x="331" y="296" width="1" height="4" fill="#ff00ff"/><rect x="332" y="295" width="1" height="5" fill="#ff00ff"/><rect x="333" y="295" width="1" height="2" fill="#ff00ff"/><rect x="334" y="296" width="1" height="5" fill="#ff00ff"/><rect x="335" y="295" width="1" height="6" fill="#ff00ff"/><rect x="336" y="294" width="1" height="2" fill="#ff00ff"/><rect x="337" y="294" width="1" height="8" fill="#ff00ff"/><rect x="338" y="294" width="1" height="8" fill="#ff00ff"/><rect x="339" y="294" width="1" height="1" fill="#ff00ff"/><rect x="340" y="294" width="1" height="1" fill="#ff00ff"/><rect x="341" y="294" width="1" height="5" fill="#ff00ff"/><rect x="342" y="298" width="1" height="1" fill="#ff00ff"/><rect x="343" y="296" width="1" height="3" fill="#ff00ff"/><rect x="344" y="296" width="1" height="3" fill="#ff00ff"/><rect x="345" y="298" width="1" height="2" fill="#ff00ff"/><rect x="346" y="294" width="1" height="6" fill="#ff00ff"/><rect x="347" y="294" width="1" height="6" fill="#ff00ff"/><rect x="348" y="294" width="1" height="6" fill="#ff00ff"/><rect x="349" y="294" width="1" height="3" fill="#ff00ff"/><rect x="350" y="296" width="1" height="3" fill="#ff00ff"/><rect x="351" y="296" width="1" height="3" fill="#ff00ff"/><rect x="352" y="296" width="1" height="1" fill="#ff00ff"/><rect x="353" y="296" width="1" height="3" fill="#ff00ff"/><rect x="354" y="298" width="1" height="3" fill="#ff00ff"/><rect x="355" y="296" width="1" height="5" fill="#ff00ff"/><rect x="356" y="296" width="1" height="4" fill="#ff00ff"/><rect x="357" y="298" width="1" height="2" fill="#ff00ff"/><rect x="358" y="297" width="1" height="2" fill="#ff00ff"/><rect x="359" y="297" width="1" height="1" fill="#ff00ff"/><rect x="360" y="296" width="1" height="2" fill="#ff00ff"/><rect x="361" y="296" width="1" height="1" fill="#ff00ff"/><rect x="362" y="296" width="1" height="1" fill="#ff00ff"/><rect x="363" y="296" width="1" height="2" fill="#ff00ff"/><rect x="364" y="295" width="1" height="3" fill="#ff00ff"/><rect x="365" y="293" width="1" height="3" fill="#ff00ff"/><rect x="366" y="293" width="1" height="3" fill="#ff00ff"/><rect x="367" y="294" width="1" height="2" fill="#ff00ff"/><rect x="368" y="294" width="1" height="5" fill="#ff00ff"/><rect x="369" y="293" width="1" height="6" fill="#ff00ff"/><rect x="370" y="293" width="1" height="8" fill="#ff00ff"/><rect x="371" y="296" width="1" height="5" fill="#ff00ff"/><rect x="372" y="296" width="1" height="3" fill="#ff00ff"/><rect x="373" y="296" width="1" height="3" fill="#ff00ff"/><rect x="374" y="296" width="1" height="3" fill="#ff00ff"/><rect x="375" y="293" width="1" height="6" fill="#ff00ff"/><rect x="376" y="293" width="1" height="4" fill="#ff00ff"/><rect x="377" y="296" width="1" height="2" fill="#ff00ff"/><rect x="378" y="290" width="1" height="8" fill="#ff00ff"/><rect x="379" y="290" width="1" height="3" fill="#ff00ff"/><rect x="380" y="292" width="1" height="4" fill="#ff00ff"/><rect x="381" y="295" width="1" height="5" fill="#ff00ff"/><rect x="382" y="295" width="1" height="5" fill="#ff00ff"/><rect x="383" y="295" width="1" height="2" fill="#ff00ff"/><rect x="384" y="296" width="1" height="3" fill="#ff00ff"/><rect x="385" y="294" width="1" height="5" fill="#ff00ff"/><rect x="386" y="294" width="1" height="5" fill="#ff00ff"/><rect x="387" y="296" width="1" height="3" fill="#ff00ff"/><rect x="388" y="296" width="1" height="3" fill="#ff00ff"/><rect x="389" y="296" width="1" height="3" fill="#ff00ff"/><rect x="390" y="296" width="1" height="3" fill="#ff00ff"/><rect x="391" y="298" width="1" height="5" fill="#ff00ff"/><rect x="392" y="298" width="1" height="5" fill="#ff00ff"/><rect x="393" y="298" width="1" height="2" fill="#ff00ff"/><rect x="394" y="293" width="1" height="7" fill="#ff00ff"/><rect x="395" y="293" width="1" height="2" fill="#ff00ff"/><rect x="396" y="294" width="1" height="3" fill="#ff00ff"/><rect x="397" y="296" width="1" height="1" fill="#ff00ff"/><rect x="398" y="296" width="1" height="2" fill="#ff00ff"/><rect x="399" y="296" width="1" height="2" fill="#ff00ff"/><rect x="400" y="296" width="1" height="2" fill="#ff00ff"/><rect x="401" y="297" width="1" height="2" fill="#ff00ff"/><rect x="402" y="298" width="1" height="4" fill="#ff00ff"/><rect x="403" y="299" width="1" height="3" fill="#ff00ff"/><rect x="404" y="299" width="1" height="2" fill="#ff00ff"/><rect x="405" y="298" width="1" height="3" fill="#ff00ff"/><rect x="406" y="296" width="1" height="3" fill="#ff00ff"/><rect x="407" y="296" width="1" height="2" fill="#ff00ff"/><rect x="408" y="297" width="1" height="2" fill="#ff00ff"/><rect x="409" y="294" width="1" height="5" fill="#ff00ff"/><rect x="410" y="294" width="1" height="4" fill="#ff00ff"/><rect x="411" y="293" width="1" height="5" fill="#ff00ff"/><rect x="412" y="293" width="1" height="6" fill="#ff00ff"/><rect x="413" y="298" width="1" height="1" fill="#ff00ff"/><rect x="414" y="295" width="1" height="4" fill="#ff00ff"/><rect x="415" y="292" width="1" height="4" fill="#ff00ff"/><rect x="416" y="292" width="1" height="8" fill="#ff00ff"/><rect x="417" y="299" width="1" height="1" fill="#ff00ff"/><rect x="418" y="298" width="1" height="2" fill="#ff00ff"/><rect x="419" y="298" width="1" height="1" fill="#ff00ff"/><rect x="420" y="298" width="1" height="1" fill="#ff00ff"/><rect x="421" y="293" width="1" height="6" fill="#ff00ff"/><rect x="422" y="292" width="1" height="2" fill="#ff00ff"/><rect x="423" y="292" width="1" height="7" fill="#ff00ff"/><rect x="424" y="295" width="1" height="4" fill="#ff00ff"/><rect x="425" y="295" width="1" height="3" fill="#ff00ff"/><rect x="426" y="294" width="1" height="4" fill="#ff00ff"/><rect x="427" y="294" width="1" height="6" fill="#ff00ff"/><rect x="428" y="294" width="1" height="6" fill="#ff00ff"/><rect x="429" y="292" width="1" height="3" fill="#ff00ff"/><rect x="430" y="292" width="1" height="3" fill="#ff00ff"/><rect x="431" y="294" width="1" height="8" fill="#ff00ff"/><rect x="432" y="293" width="1" height="9" fill="#ff00ff"/><rect x="433" y="293" width="1" height="8" fill="#ff00ff"/><rect x="434" y="294" width="1" height="7" fill="#ff00ff"/><rect x="435" y="294" width="1" height="4" fill="#ff00ff"/><rect x="436" y="297" width="1" height="2" fill="#ff00ff"/><rect x="437" y="298" width="1" height="1" fill="#ff00ff"/><rect x="438" y="296" width="1" height="3" fill="#ff00ff"/><rect x="439" y="296" width="1" height="2" fill="#ff00ff"/><rect x="440" y="295" width="1" height="3" fill="#ff00ff"/><rect x="441" y="295" width="1" height="2" fill="#ff00ff"/><rect x="442" y="296" width="1" height="1" fill="#ff00ff"/><rect x="443" y="294" width="1" height="3" fill="#ff00ff"/><rect x="444" y="294" width="1" height="4" fill="#ff00ff"/><rect x="445" y="296" width="1" height="2" fill="#ff00ff"/><rect x="446" y="296" width="1" height="1" fill="#ff00ff"/><rect x="447" y="296" width="1" height="1" fill="#ff00ff"/><rect x="448" y="295" width="1" height="2" fill="#ff00ff"/><rect x="449" y="295" width="1" height="3" fill="#ff00ff"/><rect x="450" y="297" width="1" height="2" fill="#ff00ff"/><rect x="451" y="298" width="1" height="2" fill="#ff00ff"/><rect x="452" y="293" width="1" height="7" fill="#ff00ff"/><rect x="453" y="293" width="1" height="4" fill="#ff00ff"/><rect x="454" y="294" width="1" height="3" fill="#ff00ff"/><rect x="455" y="294" width="1" height="3" fill="#ff00ff"/><rect x="456" y="291" width="1" height="6" fill="#ff00ff"/><rect x="457" y="291" width="1" height="8" fill="#ff00ff"/><rect x="458" y="298" width="1" height="1" fill="#ff00ff"/><rect x="459" y="298" width="1" height="1" fill="#ff00ff"/><rect x="460" y="296" width="1" height="3" fill="#ff00ff"/><rect x="461" y="296" width="1" height="6" fill="#ff00ff"/><rect x="462" y="297" width="1" height="5" fill="#ff00ff"/><rect x="463" y="294" width="1" height="4" fill="#ff00ff"/><rect x="464" y="294" width="1" height="6" fill="#ff00ff"/><rect x="465" y="296" width="1" height="4" fill="#ff00ff"/><rect x="466" y="296" width="1" height="2" fill="#ff00ff"/><rect x="467" y="297" width="1" height="2" fill="#ff00ff"/><rect x="468" y="295" width="1" height="4" fill="#ff00ff"/><rect x="469" y="294" width="1" height="2" fill="#ff00ff"/><rect x="470" y="294" width="1" height="6" fill="#ff00ff"/><rect x="471" y="294" width="1" height="6" fill="#ff00ff"/><rect x="472" y="294" width="1" height="2" fill="#ff00ff"/><rect x="473" y="293" width="1" height="3" fill="#ff00ff"/><rect x="474" y="293" width="1" height="4" fill="#ff00ff"/><rect x="475" y="295" width="1" height="2" fill="#ff00ff"/><rect x="476" y="295" width="1" height="2" fill="#ff00ff"/><rect x="477" y="293" width="1" height="4" fill="#ff00ff"/><rect x="478" y="293" width="1" height="3" fill="#ff00ff"/><rect x="479" y="292" width="1" height="4" fill="#ff00ff"/><rect x="480" y="292" width="1" height="3" fill="#ff00ff"/><rect x="481" y="294" width="1" height="5" fill="#ff00ff"/><rect x="482" y="294" width="1" height="5" fill="#ff00ff"/><rect x="483" y="294" width="1" height="4" fill="#ff00ff"/><rect x="484" y="295" width="1" height="3" fill="#ff00ff"/><rect x="485" y="292" width="1" height="4" fill="#ff00ff"/><rect x="486" y="292" width="1" height="6" fill="#ff00ff"/><rect x="487" y="295" width="1" height="3" fill="#ff00ff"/><rect x="488" y="292" width="1" height="4" fill="#ff00ff"/><rect x="489" y="292" width="1" height="3" fill="#ff00ff"/><rect x="490" y="293" width="1" height="2" fill="#ff00ff"/><rect x="491" y="293" width="1" height="3" fill="#ff00ff"/><rect x="492" y="292" width="1" height="4" fill="#ff00ff"/><rect x="493" y="292" width="1" height="5" fill="#ff00ff"/><rect x="494" y="293" width="1" height="4" fill="#ff00ff"/><rect x="495" y="292" width="1" height="2" fill="#ff00ff"/><rect x="496" y="292" width="1" height="3" fill="#ff00ff"/><rect x="497" y="291" width="1" height="4" fill="#ff00ff"/><rect x="498" y="291" width="1" height="3" fill="#ff00ff"/><rect x="499" y="293" width="1" height="2" fill="#ff00ff"/><rect x="500" y="292" width="1" height="3" fill="#ff00ff"/><rect x="501" y="292" width="1" height="3" fill="#ff00ff"/><rect x="502" y="291" width="1" height="4" fill="#ff00ff"/><rect x="503" y="291" width="1" height="5" fill="#ff00ff"/><rect x="504" y="294" width="1" height="2" fill="#ff00ff"/><rect x="505" y="291" width="1" height="4" fill="#ff00ff"/><rect x="506" y="291" width="1" height="3" fill="#ff00ff"/><rect x="507" y="293" width="1" height="3" fill="#ff00ff"/><rect x="508" y="293" width="1" height="3" fill="#ff00ff"/><rect x="509" y="290" width="1" height="4" fill="#ff00ff"/><rect x="510" y="290" width="1" height="4" fill="#ff00ff"/><rect x="511" y="293" width="1" height="2" fill="#ff00ff"/><rect x="512" y="288" width="1" height="7" fill="#ff00ff"/><rect x="513" y="288" width="1" height="3" fill="#ff00ff"/><rect x="514" y="290" width="1" height="6" fill="#ff00ff"/><rect x="515" y="289" width="1" height="7" fill="#ff00ff"/><rect x="516" y="287" width="1" height="3" fill="#ff00ff"/><rect x="61" y="355" width="1" height="2" fill="#0000ff"/><rect x="72" y="355" width="1" height="1" fill="#0000ff"/><rect x="82" y="355" width="1" height="1" fill="#0000ff"/><rect x="93" y="355" width="1" height="1" fill="#0000ff"/><rect x="103" y="355" width="1" height="1" fill="#0000ff"/><rect x="113" y="355" width="1" height="2" fill="#0000ff"/><rect x="124" y="355" width="1" height="1" fill="#0000ff"/><rect x="134" y="355" width="1" height="1" fill="#0000ff"/><rect x="144" y="355" width="1" height="1" fill="#0000ff"/><rect x="155" y="355" width="1" height="1" fill="#0000ff"/><rect x="165" y="355" width="1" height="2" fill="#0000ff"/><rect x="176" y="355" width="1" height="1" fill="#0000ff"/><rect x="186" y="355" width="1" height="1" fill="#0000ff"/><rect x="196" y="355" width="1" height="1" fill="#0000ff"/><rect x="207" y="355" width="1" height="1" fill="#0000ff"/><rect x="217" y="355" width="1" height="2" fill="#0000ff"/><rect x="228" y="355" width="1" height="1" fill="#0000ff"/><rect x="238" y="355" width="1" height="1" fill="#0000ff"/><rect x="248" y="355" width="1" height="1" fill="#0000ff"/><rect x="259" y="355" width="1" height="1" fill="#0000ff"/><rect x="269" y="355" width="1" height="2" fill="#0000ff"/><rect x="279" y="355" width="1" height="1" fill="#0000ff"/><rect x="290" y="355" width="1" height="1" fill="#0000ff"/><rect x="300" y="355" width="1" height="1" fill="#0000ff"/><rect x="311" y="355" width="1" height="1" fill="#0000ff"/><rect x="321" y="355" width="1" height="2" fill="#0000ff"/><rect x="331" y="355" width="1" height="1" fill="#0000ff"/><rect x="342" y="355" width="1" height="1" fill="#0000ff"/><rect x="352" y="355" width="1" height="1" fill="#0000ff"/><rect x="363" y="355" width="1" height="1" fill="#0000ff"/><rect x="373" y="355" width="1" height="2" fill="#0000ff"/><rect x="383" y="355" width="1" height="1" fill="#0000ff"/><rect x="394" y="355" width="1" height="1" fill="#0000ff"/><rect x="404" y="355" width="1" height="1" fill="#0000ff"/><rect x="414" y="355" width="1" height="1" fill="#0000ff"/><rect x="425" y="355" width="1" height="2" fill="#0000ff"/><rect x="435" y="355" width="1" height="1" fill="#0000ff"/><rect x="446" y="355" width="1" height="1" fill="#0000ff"/><rect x="456" y="355" width="1" height="1" fill="#0000ff"/><rect x="466" y="355" width="1" height="1" fill="#0000ff"/><rect x="477" y="355" width="1" height="2" fill="#0000ff"/><rect x="487" y="355" width="1" height="1" fill="#0000ff"/><rect x="498" y="355" width="1" height="1" fill="#0000ff"/><rect x="508" y="355" width="1" height="1" fill="#0000ff"/><rect x="518" y="355" width="1" height="1" fill="#0000ff"/><rect x="529" y="355" width="1" height="2" fill="#0000ff"/></svg><div class="r" style="left:562px;top:59px;width:66px;height:17px;border:1px solid #008080;border-radius:3px;background:#fff;overflow:hidden;"><div class="r" style="left:0;right:0;top:10px;height:1px;background:#c0c0c0;"></div><div class="r" style="left:0;right:0;top:11px;height:1px;background:repeating-linear-gradient(90deg,#fff 0 1px,#c0c0c0 1px 2px);"></div><div class="r" style="left:0;right:0;top:12px;bottom:1px;background:#c0c0c0;"></div><div class="r" style="left:0;right:0;bottom:0;height:1px;background:#808080;"></div></div><div class="r" style="left:654px;top:59px;width:66px;height:17px;border:1px solid #008080;border-radius:3px;background:#fff;overflow:hidden;"><div class="r" style="left:0;right:0;top:10px;height:1px;background:#c0c0c0;"></div><div class="r" style="left:0;right:0;top:11px;height:1px;background:repeating-linear-gradient(90deg,#fff 0 1px,#c0c0c0 1px 2px);"></div><div class="r" style="left:0;right:0;top:12px;bottom:2px;background:#c0c0c0;"></div><div class="r" style="left:0;right:0;bottom:0;height:2px;background:#808080;"></div></div><div class="r" style="left:656px;top:61px;width:62px;height:13px;border:1px dotted #000;"></div><div class="r" style="left:562px;top:89px;width:160px;height:66px;border:1px solid #c0c0c0;border-radius:4px;"></div><div class="r" style="left:568px;top:86px;width:62px;height:8px;background:#fff;"></div><div class="r" style="left:562px;top:162px;width:160px;height:175px;border:1px solid #c0c0c0;border-radius:4px;"></div><div class="r" style="left:568px;top:158px;width:45px;height:8px;background:#fff;"></div><div class="r" style="left:562px;top:345px;width:160px;height:21px;border:1px solid #c0c0c0;border-radius:4px;"></div><div class="r" style="left:562px;top:375px;width:160px;height:60px;border:1px solid #c0c0c0;border-radius:4px;"></div><div class="r" style="left:631px;top:170px;width:81px;height:19px;border:1px solid #808080;"></div><div class="r" style="left:696px;top:171px;width:16px;height:18px;background:#808080;"></div><div class="r" style="left:697px;top:172px;width:14px;height:8px;background:#fff;"></div><div class="r" style="left:697px;top:180px;width:14px;height:8px;background:#c0c0c0;"></div><svg width="16" height="18" viewBox="0 0 16 18" style="left:696px;top:171px" shape-rendering="auto"><path d="M4.5 6 L8 9.5 L11.5 6" stroke="#003030" stroke-width="1.8" fill="none"/></svg><div class="r" style="left:631px;top:194px;width:70px;height:1px;background:repeating-linear-gradient(90deg,#808080 0 2px,#fff 2px 4px);"></div><div class="r" style="left:631px;top:211px;width:70px;height:1px;background:repeating-linear-gradient(90deg,#808080 0 2px,#fff 2px 4px);"></div><div class="r" style="left:631px;top:194px;width:1px;height:18px;background:repeating-linear-gradient(180deg,#808080 0 2px,#fff 2px 4px);"></div><div class="r" style="left:700px;top:194px;width:1px;height:18px;background:repeating-linear-gradient(180deg,#808080 0 2px,#fff 2px 4px);"></div><div class="r" style="left:631px;top:217px;width:70px;height:1px;background:repeating-linear-gradient(90deg,#808080 0 2px,#fff 2px 4px);"></div><div class="r" style="left:631px;top:234px;width:70px;height:1px;background:repeating-linear-gradient(90deg,#808080 0 2px,#fff 2px 4px);"></div><div class="r" style="left:631px;top:217px;width:1px;height:18px;background:repeating-linear-gradient(180deg,#808080 0 2px,#fff 2px 4px);"></div><div class="r" style="left:700px;top:217px;width:1px;height:18px;background:repeating-linear-gradient(180deg,#808080 0 2px,#fff 2px 4px);"></div><div class="r" style="left:569px;top:242px;width:12px;height:12px;border:1px solid #008080;background:#fff;"></div><div class="r" style="left:569px;top:261px;width:12px;height:12px;border:1px solid #008080;background:#fff;"></div><svg width="13" height="13" viewBox="0 0 13 13" style="left:569px;top:261px"><path d="M3 6 L5.5 8.5 L10 3.5" stroke="#00ff00" stroke-width="2.4" fill="none"/></svg><div class="r" style="left:569px;top:276px;width:12px;height:12px;border:1px solid #008080;background:#fff;"></div><svg width="13" height="13" viewBox="0 0 13 13" style="left:569px;top:276px"><path d="M3 6 L5.5 8.5 L10 3.5" stroke="#00ff00" stroke-width="2.4" fill="none"/></svg><div class="r" style="left:569px;top:291px;width:12px;height:12px;border:1px solid #008080;background:#fff;"></div><svg width="13" height="13" viewBox="0 0 13 13" style="left:569px;top:291px"><path d="M3 6 L5.5 8.5 L10 3.5" stroke="#00ff00" stroke-width="2.4" fill="none"/></svg><div class="r" style="left:569px;top:306px;width:12px;height:12px;border:1px solid #008080;background:#fff;"></div><svg width="13" height="13" viewBox="0 0 13 13" style="left:569px;top:306px"><path d="M3 6 L5.5 8.5 L10 3.5" stroke="#00ff00" stroke-width="2.4" fill="none"/></svg><div class="r" style="left:569px;top:321px;width:12px;height:12px;border:1px solid #008080;background:#fff;"></div><svg width="13" height="13" viewBox="0 0 13 13" style="left:569px;top:321px"><path d="M3 6 L5.5 8.5 L10 3.5" stroke="#00ff00" stroke-width="2.4" fill="none"/></svg><div class="r" style="left:19px;top:375px;width:169px;height:62px;border:1px solid #fff;"></div><div class="r" style="left:18px;top:374px;width:169px;height:62px;border:1px solid #808080;"></div><div class="r" style="left:27px;top:370px;width:63px;height:9px;background:#fff;"></div><div class="r" style="left:199px;top:375px;width:169px;height:62px;border:1px solid #fff;"></div><div class="r" style="left:198px;top:374px;width:169px;height:62px;border:1px solid #808080;"></div><div class="r" style="left:207px;top:370px;width:73px;height:9px;background:#fff;"></div><div class="r" style="left:380px;top:375px;width:169px;height:45px;border:1px solid #fff;"></div><div class="r" style="left:379px;top:374px;width:169px;height:45px;border:1px solid #808080;"></div><div class="r" style="left:388px;top:370px;width:40px;height:9px;background:#fff;"></div><div class="r" style="left:28px;top:371px;width:8px;height:8px;background:#000;"></div><div class="r" style="left:29px;top:372px;width:6px;height:6px;background:#00ffff;"></div><div class="r" style="left:208px;top:371px;width:8px;height:8px;background:#000;"></div><div class="r" style="left:209px;top:372px;width:6px;height:6px;background:#ffff00;"></div><div class="r" style="left:389px;top:371px;width:8px;height:8px;background:#000;"></div><div class="r" style="left:390px;top:372px;width:6px;height:6px;background:#ff00ff;"></div><div class="r" style="left:671px;top:5px;width:21px;height:21px;background:#808080;"></div><div class="r" style="left:672px;top:6px;width:19px;height:5px;background:#fff;"></div><div class="r" style="left:672px;top:11px;width:19px;height:12px;background:#c0c0c0;"></div><div class="r" style="left:672px;top:23px;width:19px;height:2px;background:#808080;"></div><div class="r" style="left:671px;top:5px;width:1px;height:1px;background:#c0c0c0;"></div><div class="r" style="left:691px;top:5px;width:1px;height:1px;background:#c0c0c0;"></div><div class="r" style="left:671px;top:25px;width:1px;height:1px;background:#c0c0c0;"></div><div class="r" style="left:691px;top:25px;width:1px;height:1px;background:#c0c0c0;"></div><div class="r" style="left:675px;top:17px;width:9px;height:5px;background:#fff;"></div><div class="r" style="left:676px;top:18px;width:7px;height:3px;background:#808080;"></div><div class="r" style="left:676px;top:18px;width:7px;height:1px;background:#004040;"></div><div class="r" style="left:694px;top:5px;width:21px;height:21px;background:#c0c0c0;"></div><div class="r" style="left:696px;top:6px;width:17px;height:11px;background:#fff;"></div><div class="r" style="left:699px;top:10px;width:11px;height:11px;background:#808080;"></div><div class="r" style="left:700px;top:12px;width:9px;height:5px;background:#fff;"></div><div class="r" style="left:700px;top:17px;width:9px;height:3px;background:#c0c0c0;"></div><div class="r" style="left:701px;top:16px;width:1px;height:1px;background:#c0c0c0;"></div><div class="r" style="left:703px;top:16px;width:1px;height:1px;background:#c0c0c0;"></div><div class="r" style="left:705px;top:16px;width:1px;height:1px;background:#c0c0c0;"></div><div class="r" style="left:707px;top:16px;width:1px;height:1px;background:#c0c0c0;"></div><div class="r" style="left:716px;top:4px;width:23px;height:23px;background:#c0c0c0;"></div><div class="r" style="left:717px;top:5px;width:21px;height:21px;background:#808080;"></div><div class="r" style="left:719px;top:6px;width:17px;height:1px;background:#c0c0c0;"></div><div class="r" style="left:717px;top:5px;width:1px;height:1px;background:#c0c0c0;"></div><div class="r" style="left:737px;top:5px;width:1px;height:1px;background:#c0c0c0;"></div><div class="r" style="left:717px;top:25px;width:1px;height:1px;background:#c0c0c0;"></div><div class="r" style="left:737px;top:25px;width:1px;height:1px;background:#c0c0c0;"></div><svg width="21" height="21" viewBox="0 0 21 21" style="left:717px;top:5px" shape-rendering="auto"><path d="M6.5 4.5 L16.5 14.5 M15.5 4.5 L5.5 14.5" stroke="#000" stroke-width="1.6" fill="none"/><path d="M5.5 4.8 L15.5 15 M15.5 4.8 L5.5 15" stroke="#fff" stroke-width="2.3" fill="none"/></svg><div class="r" style="left:612px;top:6px;width:19px;height:19px;background:#00ff00;"></div><div class="r" style="left:612px;top:6px;width:1px;height:1px;background:#fff;"></div><div class="r" style="left:630px;top:6px;width:1px;height:1px;background:#fff;"></div><div class="r" style="left:612px;top:24px;width:1px;height:1px;background:#fff;"></div><div class="r" style="left:630px;top:24px;width:1px;height:1px;background:#fff;"></div><div class="r" style="left:613px;top:23px;width:17px;height:1px;background:#008000;"></div><div class="r" style="left:613px;top:22px;width:1px;height:1px;background:#008000;"></div><div class="r" style="left:615px;top:22px;width:1px;height:1px;background:#008000;"></div><div class="r" style="left:617px;top:22px;width:1px;height:1px;background:#008000;"></div><div class="r" style="left:619px;top:22px;width:1px;height:1px;background:#008000;"></div><div class="r" style="left:621px;top:22px;width:1px;height:1px;background:#008000;"></div><div class="r" style="left:623px;top:22px;width:1px;height:1px;background:#008000;"></div><div class="r" style="left:625px;top:22px;width:1px;height:1px;background:#008000;"></div><div class="r" style="left:627px;top:22px;width:1px;height:1px;background:#008000;"></div><div class="r" style="left:629px;top:22px;width:1px;height:1px;background:#008000;"></div><div class="r" style="left:613px;top:7px;width:1px;height:1px;background:#c0c0c0;"></div><div class="r" style="left:615px;top:7px;width:1px;height:1px;background:#c0c0c0;"></div><div class="r" style="left:617px;top:7px;width:1px;height:1px;background:#c0c0c0;"></div><div class="r" style="left:619px;top:7px;width:1px;height:1px;background:#c0c0c0;"></div><div class="r" style="left:621px;top:7px;width:1px;height:1px;background:#c0c0c0;"></div><div class="r" style="left:614px;top:8px;width:1px;height:1px;background:#c0c0c0;"></div><div class="r" style="left:616px;top:8px;width:1px;height:1px;background:#c0c0c0;"></div><div class="r" style="left:618px;top:8px;width:1px;height:1px;background:#c0c0c0;"></div><div class="r" style="left:620px;top:8px;width:1px;height:1px;background:#c0c0c0;"></div><div class="r" style="left:613px;top:9px;width:1px;height:1px;background:#c0c0c0;"></div><div class="r" style="left:615px;top:9px;width:1px;height:1px;background:#c0c0c0;"></div><div class="r" style="left:617px;top:9px;width:1px;height:1px;background:#c0c0c0;"></div><div class="r" style="left:619px;top:9px;width:1px;height:1px;background:#c0c0c0;"></div><div class="r" style="left:621px;top:9px;width:1px;height:1px;background:#c0c0c0;"></div><div class="r" style="left:614px;top:10px;width:1px;height:1px;background:#c0c0c0;"></div><div class="r" style="left:616px;top:10px;width:1px;height:1px;background:#c0c0c0;"></div><div class="r" style="left:618px;top:10px;width:1px;height:1px;background:#c0c0c0;"></div><div class="r" style="left:620px;top:10px;width:1px;height:1px;background:#c0c0c0;"></div><div class="r" style="left:615px;top:9px;width:7px;height:11px;background:#c0c0c0;"></div><div class="r" style="left:616px;top:11px;width:5px;height:1px;background:#808080;"></div><div class="r" style="left:616px;top:13px;width:5px;height:1px;background:#808080;"></div><div class="r" style="left:616px;top:15px;width:5px;height:1px;background:#808080;"></div><div class="r" style="left:616px;top:17px;width:5px;height:1px;background:#808080;"></div><div class="r" style="left:621px;top:11px;width:7px;height:11px;background:#000;"></div><div class="r" style="left:622px;top:12px;width:5px;height:9px;background:#c0c0c0;"></div><div class="r" style="left:627px;top:11px;width:1px;height:1px;background:#00ff00;"></div><div class="r" style="left:626px;top:12px;width:1px;height:1px;background:#000;"></div><div class="r" style="left:623px;top:14px;width:3px;height:1px;background:#808080;"></div><div class="r" style="left:623px;top:16px;width:3px;height:1px;background:#808080;"></div><div class="r" style="left:623px;top:18px;width:3px;height:1px;background:#808080;"></div><div class="r" style="left:635px;top:6px;width:19px;height:19px;background:#008000;"></div><div class="r" style="left:635px;top:6px;width:1px;height:1px;background:#fff;"></div><div class="r" style="left:653px;top:6px;width:1px;height:1px;background:#fff;"></div><div class="r" style="left:635px;top:24px;width:1px;height:1px;background:#fff;"></div><div class="r" style="left:653px;top:24px;width:1px;height:1px;background:#fff;"></div><div class="r" style="left:637px;top:7px;width:1px;height:1px;background:#00ff00;"></div><div class="r" style="left:639px;top:7px;width:1px;height:1px;background:#00ff00;"></div><div class="r" style="left:641px;top:7px;width:1px;height:1px;background:#00ff00;"></div><div class="r" style="left:643px;top:7px;width:1px;height:1px;background:#00ff00;"></div><div class="r" style="left:645px;top:7px;width:1px;height:1px;background:#00ff00;"></div><div class="r" style="left:647px;top:7px;width:1px;height:1px;background:#00ff00;"></div><div class="r" style="left:649px;top:7px;width:1px;height:1px;background:#00ff00;"></div><div class="r" style="left:651px;top:7px;width:1px;height:1px;background:#00ff00;"></div><div class="r" style="left:636px;top:8px;width:1px;height:1px;background:#00ff00;"></div><div class="r" style="left:650px;top:8px;width:1px;height:1px;background:#00ff00;"></div><div class="r" style="left:652px;top:8px;width:1px;height:1px;background:#00ff00;"></div><div class="r" style="left:637px;top:9px;width:1px;height:1px;background:#00ff00;"></div><div class="r" style="left:649px;top:9px;width:1px;height:1px;background:#00ff00;"></div><div class="r" style="left:651px;top:9px;width:1px;height:1px;background:#00ff00;"></div><div class="r" style="left:636px;top:10px;width:1px;height:1px;background:#00ff00;"></div><div class="r" style="left:650px;top:10px;width:1px;height:1px;background:#00ff00;"></div><div class="r" style="left:652px;top:10px;width:1px;height:1px;background:#00ff00;"></div><div class="r" style="left:637px;top:11px;width:1px;height:1px;background:#00ff00;"></div><div class="r" style="left:649px;top:11px;width:1px;height:1px;background:#00ff00;"></div><div class="r" style="left:651px;top:11px;width:1px;height:1px;background:#00ff00;"></div><div class="r" style="left:636px;top:12px;width:1px;height:1px;background:#00ff00;"></div><div class="r" style="left:650px;top:12px;width:1px;height:1px;background:#00ff00;"></div><div class="r" style="left:652px;top:12px;width:1px;height:1px;background:#00ff00;"></div><div class="r" style="left:637px;top:13px;width:1px;height:1px;background:#00ff00;"></div><div class="r" style="left:649px;top:13px;width:1px;height:1px;background:#00ff00;"></div><div class="r" style="left:651px;top:13px;width:1px;height:1px;background:#00ff00;"></div><div class="r" style="left:636px;top:14px;width:1px;height:1px;background:#00ff00;"></div><div class="r" style="left:650px;top:14px;width:1px;height:1px;background:#00ff00;"></div><div class="r" style="left:652px;top:14px;width:1px;height:1px;background:#00ff00;"></div><div class="r" style="left:637px;top:15px;width:1px;height:1px;background:#00ff00;"></div><div class="r" style="left:649px;top:15px;width:1px;height:1px;background:#00ff00;"></div><div class="r" style="left:651px;top:15px;width:1px;height:1px;background:#00ff00;"></div><div class="r" style="left:636px;top:16px;width:1px;height:1px;background:#00ff00;"></div><div class="r" style="left:650px;top:16px;width:1px;height:1px;background:#00ff00;"></div><div class="r" style="left:652px;top:16px;width:1px;height:1px;background:#00ff00;"></div><div class="r" style="left:637px;top:17px;width:1px;height:1px;background:#00ff00;"></div><div class="r" style="left:649px;top:17px;width:1px;height:1px;background:#00ff00;"></div><div class="r" style="left:651px;top:17px;width:1px;height:1px;background:#00ff00;"></div><div class="r" style="left:636px;top:18px;width:1px;height:1px;background:#00ff00;"></div><div class="r" style="left:650px;top:18px;width:1px;height:1px;background:#00ff00;"></div><div class="r" style="left:652px;top:18px;width:1px;height:1px;background:#00ff00;"></div><div class="r" style="left:637px;top:19px;width:1px;height:1px;background:#00ff00;"></div><div class="r" style="left:649px;top:19px;width:1px;height:1px;background:#00ff00;"></div><div class="r" style="left:651px;top:19px;width:1px;height:1px;background:#00ff00;"></div><div class="r" style="left:636px;top:20px;width:1px;height:1px;background:#00ff00;"></div><div class="r" style="left:638px;top:20px;width:1px;height:1px;background:#00ff00;"></div><div class="r" style="left:640px;top:20px;width:1px;height:1px;background:#00ff00;"></div><div class="r" style="left:642px;top:20px;width:1px;height:1px;background:#00ff00;"></div><div class="r" style="left:644px;top:20px;width:1px;height:1px;background:#00ff00;"></div><div class="r" style="left:646px;top:20px;width:1px;height:1px;background:#00ff00;"></div><div class="r" style="left:648px;top:20px;width:1px;height:1px;background:#00ff00;"></div><div class="r" style="left:650px;top:20px;width:1px;height:1px;background:#00ff00;"></div><div class="r" style="left:652px;top:20px;width:1px;height:1px;background:#00ff00;"></div><div class="r" style="left:637px;top:21px;width:1px;height:1px;background:#00ff00;"></div><div class="r" style="left:639px;top:21px;width:1px;height:1px;background:#00ff00;"></div><div class="r" style="left:641px;top:21px;width:1px;height:1px;background:#00ff00;"></div><div class="r" style="left:643px;top:21px;width:1px;height:1px;background:#00ff00;"></div><div class="r" style="left:645px;top:21px;width:1px;height:1px;background:#00ff00;"></div><div class="r" style="left:647px;top:21px;width:1px;height:1px;background:#00ff00;"></div><div class="r" style="left:649px;top:21px;width:1px;height:1px;background:#00ff00;"></div><div class="r" style="left:651px;top:21px;width:1px;height:1px;background:#00ff00;"></div><div class="r" style="left:636px;top:22px;width:1px;height:1px;background:#00ff00;"></div><div class="r" style="left:638px;top:22px;width:1px;height:1px;background:#00ff00;"></div><div class="r" style="left:640px;top:22px;width:1px;height:1px;background:#00ff00;"></div><div class="r" style="left:642px;top:22px;width:1px;height:1px;background:#00ff00;"></div><div class="r" style="left:644px;top:22px;width:1px;height:1px;background:#00ff00;"></div><div class="r" style="left:646px;top:22px;width:1px;height:1px;background:#00ff00;"></div><div class="r" style="left:648px;top:22px;width:1px;height:1px;background:#00ff00;"></div><div class="r" style="left:650px;top:22px;width:1px;height:1px;background:#00ff00;"></div><div class="r" style="left:652px;top:22px;width:1px;height:1px;background:#00ff00;"></div><div class="r" style="left:637px;top:23px;width:1px;height:1px;background:#00ff00;"></div><div class="r" style="left:639px;top:23px;width:1px;height:1px;background:#00ff00;"></div><div class="r" style="left:641px;top:23px;width:1px;height:1px;background:#00ff00;"></div><div class="r" style="left:643px;top:23px;width:1px;height:1px;background:#00ff00;"></div><div class="r" style="left:645px;top:23px;width:1px;height:1px;background:#00ff00;"></div><div class="r" style="left:647px;top:23px;width:1px;height:1px;background:#00ff00;"></div><div class="r" style="left:649px;top:23px;width:1px;height:1px;background:#00ff00;"></div><div class="r" style="left:651px;top:23px;width:1px;height:1px;background:#00ff00;"></div><div class="r" style="left:638px;top:9px;width:12px;height:7px;background:#000;"></div><div class="r" style="left:639px;top:10px;width:10px;height:5px;background:#808080;"></div><div class="r" style="left:640px;top:10px;width:4px;height:2px;background:#c0c0c0;"></div><div class="r" style="left:638px;top:16px;width:12px;height:1px;background:#000;"></div><div class="r" style="left:640px;top:16px;width:1px;height:1px;background:#808080;"></div><div class="r" style="left:642px;top:16px;width:1px;height:1px;background:#808080;"></div><div class="r" style="left:644px;top:16px;width:1px;height:1px;background:#808080;"></div><div class="r" style="left:646px;top:16px;width:1px;height:1px;background:#808080;"></div><div class="r" style="left:648px;top:16px;width:1px;height:1px;background:#808080;"></div><div class="r" style="left:650px;top:16px;width:1px;height:1px;background:#808080;"></div><div class="r" style="left:639px;top:17px;width:1px;height:1px;background:#808080;"></div><div class="r" style="left:641px;top:17px;width:1px;height:1px;background:#808080;"></div><div class="r" style="left:643px;top:17px;width:1px;height:1px;background:#808080;"></div><div class="r" style="left:645px;top:17px;width:1px;height:1px;background:#808080;"></div><div class="r" style="left:647px;top:17px;width:1px;height:1px;background:#808080;"></div><div class="r" style="left:649px;top:17px;width:1px;height:1px;background:#808080;"></div><div class="r" style="left:651px;top:17px;width:1px;height:1px;background:#808080;"></div><div class="r" style="left:640px;top:18px;width:1px;height:1px;background:#808080;"></div><div class="r" style="left:642px;top:18px;width:1px;height:1px;background:#808080;"></div><div class="r" style="left:644px;top:18px;width:1px;height:1px;background:#808080;"></div><div class="r" style="left:646px;top:18px;width:1px;height:1px;background:#808080;"></div><div class="r" style="left:648px;top:18px;width:1px;height:1px;background:#808080;"></div><div class="r" style="left:650px;top:18px;width:1px;height:1px;background:#808080;"></div><div class="r" style="left:639px;top:19px;width:1px;height:1px;background:#808080;"></div><div class="r" style="left:641px;top:19px;width:1px;height:1px;background:#808080;"></div><div class="r" style="left:643px;top:19px;width:1px;height:1px;background:#808080;"></div><div class="r" style="left:645px;top:19px;width:1px;height:1px;background:#808080;"></div><div class="r" style="left:647px;top:19px;width:1px;height:1px;background:#808080;"></div><div class="r" style="left:649px;top:19px;width:1px;height:1px;background:#808080;"></div><div class="r" style="left:651px;top:19px;width:1px;height:1px;background:#808080;"></div><div class="r" style="left:640px;top:20px;width:1px;height:1px;background:#808080;"></div><div class="r" style="left:642px;top:20px;width:1px;height:1px;background:#808080;"></div><div class="r" style="left:644px;top:20px;width:1px;height:1px;background:#808080;"></div><div class="r" style="left:646px;top:20px;width:1px;height:1px;background:#808080;"></div><div class="r" style="left:648px;top:20px;width:1px;height:1px;background:#808080;"></div><div class="r" style="left:650px;top:20px;width:1px;height:1px;background:#808080;"></div><div class="r" style="left:639px;top:21px;width:1px;height:1px;background:#808080;"></div><div class="r" style="left:641px;top:21px;width:1px;height:1px;background:#808080;"></div><div class="r" style="left:643px;top:21px;width:1px;height:1px;background:#808080;"></div><div class="r" style="left:645px;top:21px;width:1px;height:1px;background:#808080;"></div><div class="r" style="left:647px;top:21px;width:1px;height:1px;background:#808080;"></div><div class="r" style="left:649px;top:21px;width:1px;height:1px;background:#808080;"></div><div class="r" style="left:651px;top:21px;width:1px;height:1px;background:#808080;"></div><div class="r" style="left:640px;top:22px;width:1px;height:1px;background:#808080;"></div><div class="r" style="left:642px;top:22px;width:1px;height:1px;background:#808080;"></div><div class="r" style="left:644px;top:22px;width:1px;height:1px;background:#808080;"></div><div class="r" style="left:646px;top:22px;width:1px;height:1px;background:#808080;"></div><div class="r" style="left:648px;top:22px;width:1px;height:1px;background:#808080;"></div><div class="r" style="left:650px;top:22px;width:1px;height:1px;background:#808080;"></div><div id="txt"><span class="t" id="t0" style="top:10px;font-size:12px;line-height:12px;color:#000;font-weight:bold;left:6.50px;"><span class="i" style="letter-spacing:1.024px;">CD Speed : Disc Quality Test - BENQ</span></span><span class="t" id="t1" style="top:10px;font-size:12px;line-height:12px;color:#000;font-weight:bold;left:272.70px;"><span class="i" style="letter-spacing:0.713px;">DVD DD DW1620</span></span><span class="t" id="t2" style="top:10px;font-size:12px;line-height:12px;color:#000;font-weight:bold;left:399.60px;"><span class="i" style="letter-spacing:0.542px;">B7V9</span></span><span class="t" id="t3" style="top:38px;font-size:12px;line-height:12px;color:#000;left:22.80px;"><span class="i" style="transform:scaleX(0.9654);transform-origin:left center;">Disc Quality</span></span><span class="t" id="t4" style="top:59px;font-size:12px;line-height:12px;color:#000;right:212.50px;"><span class="i" style="transform:scaleX(0.9596);transform-origin:right center;">recorded with PIONEER DVD-RW  DVR-108  v1.19</span></span><span class="t" id="t5" style="top:67px;font-size:12px;line-height:12px;color:#000;right:688.50px;"><span class="i" style="transform:scaleX(0.9207);transform-origin:right center;">20</span></span><span class="t" id="t6" style="top:94px;font-size:12px;line-height:12px;color:#000;right:688.50px;"><span class="i" style="transform:scaleX(0.9207);transform-origin:right center;">16</span></span><span class="t" id="t7" style="top:120px;font-size:12px;line-height:12px;color:#000;right:688.50px;"><span class="i" style="transform:scaleX(0.9207);transform-origin:right center;">12</span></span><span class="t" id="t8" style="top:146px;font-size:12px;line-height:12px;color:#000;right:688.50px;"><span class="i" style="transform:scaleX(0.9421);transform-origin:right center;">8</span></span><span class="t" id="t9" style="top:172px;font-size:12px;line-height:12px;color:#000;right:688.50px;"><span class="i" style="transform:scaleX(0.9421);transform-origin:right center;">4</span></span><span class="t" id="t10" style="top:67px;font-size:12px;line-height:12px;color:#000;left:532.60px;"><span class="i" style="transform:scaleX(0.8533);transform-origin:left center;">16</span></span><span class="t" id="t11" style="top:84px;font-size:12px;line-height:12px;color:#000;left:532.60px;"><span class="i" style="transform:scaleX(0.8533);transform-origin:left center;">14</span></span><span class="t" id="t12" style="top:100px;font-size:12px;line-height:12px;color:#000;left:532.60px;"><span class="i" style="transform:scaleX(0.8533);transform-origin:left center;">12</span></span><span class="t" id="t13" style="top:117px;font-size:12px;line-height:12px;color:#000;left:532.60px;"><span class="i" style="transform:scaleX(0.8533);transform-origin:left center;">10</span></span><span class="t" id="t14" style="top:133px;font-size:12px;line-height:12px;color:#000;left:532.80px;"><span class="i" style="transform:scaleX(0.9421);transform-origin:left center;">8</span></span><span class="t" id="t15" style="top:149px;font-size:12px;line-height:12px;color:#000;left:532.80px;"><span class="i" style="transform:scaleX(0.9421);transform-origin:left center;">6</span></span><span class="t" id="t16" style="top:166px;font-size:12px;line-height:12px;color:#000;left:532.80px;"><span class="i" style="transform:scaleX(0.9421);transform-origin:left center;">4</span></span><span class="t" id="t17" style="top:182px;font-size:12px;line-height:12px;color:#000;left:532.80px;"><span class="i" style="transform:scaleX(0.9421);transform-origin:left center;">2</span></span><span class="t" id="t18" style="top:207px;font-size:12px;line-height:12px;color:#000;left:56.00px;"><span class="i" style="transform:scaleX(0.8509);transform-origin:left center;">0.0</span></span><span class="t" id="t19" style="top:207px;font-size:12px;line-height:12px;color:#000;left:108.00px;"><span class="i" style="transform:scaleX(0.8509);transform-origin:left center;">0.5</span></span><span class="t" id="t20" style="top:207px;font-size:12px;line-height:12px;color:#000;left:160.00px;"><span class="i" style="transform:scaleX(0.8509);transform-origin:left center;">1.0</span></span><span class="t" id="t21" style="top:207px;font-size:12px;line-height:12px;color:#000;left:212.00px;"><span class="i" style="transform:scaleX(0.8509);transform-origin:left center;">1.5</span></span><span class="t" id="t22" style="top:207px;font-size:12px;line-height:12px;color:#000;left:264.00px;"><span class="i" style="transform:scaleX(0.8509);transform-origin:left center;">2.0</span></span><span class="t" id="t23" style="top:207px;font-size:12px;line-height:12px;color:#000;left:316.00px;"><span class="i" style="transform:scaleX(0.8509);transform-origin:left center;">2.5</span></span><span class="t" id="t24" style="top:207px;font-size:12px;line-height:12px;color:#000;left:368.00px;"><span class="i" style="transform:scaleX(0.8509);transform-origin:left center;">3.0</span></span><span class="t" id="t25" style="top:207px;font-size:12px;line-height:12px;color:#000;left:420.00px;"><span class="i" style="transform:scaleX(0.8509);transform-origin:left center;">3.5</span></span><span class="t" id="t26" style="top:207px;font-size:12px;line-height:12px;color:#000;left:472.00px;"><span class="i" style="transform:scaleX(0.8509);transform-origin:left center;">4.0</span></span><span class="t" id="t27" style="top:207px;font-size:12px;line-height:12px;color:#000;left:524.00px;"><span class="i" style="transform:scaleX(0.8509);transform-origin:left center;">4.5</span></span><span class="t" id="t28" style="top:217px;font-size:12px;line-height:12px;color:#000;right:688.50px;"><span class="i" style="transform:scaleX(0.9207);transform-origin:right center;">10</span></span><span class="t" id="t29" style="top:244px;font-size:12px;line-height:12px;color:#000;right:688.50px;"><span class="i" style="transform:scaleX(0.9421);transform-origin:right center;">8</span></span><span class="t" id="t30" style="top:270px;font-size:12px;line-height:12px;color:#000;right:688.50px;"><span class="i" style="transform:scaleX(0.9421);transform-origin:right center;">6</span></span><span class="t" id="t31" style="top:296px;font-size:12px;line-height:12px;color:#000;right:688.50px;"><span class="i" style="transform:scaleX(0.9421);transform-origin:right center;">4</span></span><span class="t" id="t32" style="top:322px;font-size:12px;line-height:12px;color:#000;right:688.50px;"><span class="i" style="transform:scaleX(0.9421);transform-origin:right center;">2</span></span><span class="t" id="t33" style="top:217px;font-size:12px;line-height:12px;color:#000;left:532.40px;"><span class="i" style="transform:scaleX(0.9207);transform-origin:left center;">20</span></span><span class="t" id="t34" style="top:244px;font-size:12px;line-height:12px;color:#000;left:532.60px;"><span class="i" style="transform:scaleX(0.9207);transform-origin:left center;">16</span></span><span class="t" id="t35" style="top:270px;font-size:12px;line-height:12px;color:#000;left:532.60px;"><span class="i" style="transform:scaleX(0.9207);transform-origin:left center;">12</span></span><span class="t" id="t36" style="top:296px;font-size:12px;line-height:12px;color:#000;left:532.80px;"><span class="i" style="transform:scaleX(0.9421);transform-origin:left center;">8</span></span><span class="t" id="t37" style="top:322px;font-size:12px;line-height:12px;color:#000;left:532.80px;"><span class="i" style="transform:scaleX(0.9421);transform-origin:left center;">4</span></span><span class="t" id="t38" style="top:357px;font-size:12px;line-height:12px;color:#000;left:56.00px;"><span class="i" style="transform:scaleX(0.8509);transform-origin:left center;">0.0</span></span><span class="t" id="t39" style="top:357px;font-size:12px;line-height:12px;color:#000;left:108.00px;"><span class="i" style="transform:scaleX(0.8509);transform-origin:left center;">0.5</span></span><span class="t" id="t40" style="top:357px;font-size:12px;line-height:12px;color:#000;left:160.00px;"><span class="i" style="transform:scaleX(0.8509);transform-origin:left center;">1.0</span></span><span class="t" id="t41" style="top:357px;font-size:12px;line-height:12px;color:#000;left:212.00px;"><span class="i" style="transform:scaleX(0.8509);transform-origin:left center;">1.5</span></span><span class="t" id="t42" style="top:357px;font-size:12px;line-height:12px;color:#000;left:264.00px;"><span class="i" style="transform:scaleX(0.8509);transform-origin:left center;">2.0</span></span><span class="t" id="t43" style="top:357px;font-size:12px;line-height:12px;color:#000;left:316.00px;"><span class="i" style="transform:scaleX(0.8509);transform-origin:left center;">2.5</span></span><span class="t" id="t44" style="top:357px;font-size:12px;line-height:12px;color:#000;left:368.00px;"><span class="i" style="transform:scaleX(0.8509);transform-origin:left center;">3.0</span></span><span class="t" id="t45" style="top:357px;font-size:12px;line-height:12px;color:#000;left:420.00px;"><span class="i" style="transform:scaleX(0.8509);transform-origin:left center;">3.5</span></span><span class="t" id="t46" style="top:357px;font-size:12px;line-height:12px;color:#000;left:472.00px;"><span class="i" style="transform:scaleX(0.8509);transform-origin:left center;">4.0</span></span><span class="t" id="t47" style="top:357px;font-size:12px;line-height:12px;color:#000;left:524.00px;"><span class="i" style="transform:scaleX(0.8509);transform-origin:left center;">4.5</span></span><span class="t k" id="t48" style="top:62px;font-size:12px;line-height:12px;color:#000;left:583.50px;"><span class="i" style="letter-spacing:0.150px;">開始</span></span><span class="t k" id="t49" style="top:62px;font-size:12px;line-height:12px;color:#000;left:667.90px;"><span class="i" style="transform:scaleX(0.9708);transform-origin:left center;">終了</span></span><span class="t" id="t50" style="top:62px;font-size:12px;line-height:12px;color:#000;left:693.10px;"><span class="i" style="transform:scaleX(0.8554);transform-origin:left center;">(<u>X</u>)</span></span><span class="t k" id="t51" style="top:83px;font-size:12px;line-height:12px;color:#008080;left:569.60px;"><span class="i" style="transform:scaleX(0.7146);transform-origin:left center;">ディスク</span></span><span class="t k" id="t52" style="top:83px;font-size:12px;line-height:12px;color:#008080;left:604.30px;"><span class="i" style="letter-spacing:0.150px;">情報</span></span><span class="t k" id="t53" style="top:95px;font-size:12px;line-height:12px;color:#000;left:568.50px;"><span class="i" style="transform:scaleX(0.7956);transform-origin:left center;">タイプ:</span></span><span class="t" id="t54" style="top:110px;font-size:12px;line-height:12px;color:#000;left:568.50px;"><span class="i" style="transform:scaleX(0.8668);transform-origin:left center;">ID:</span></span><span class="t k" id="t55" style="top:125px;font-size:12px;line-height:12px;color:#000;left:568.50px;"><span class="i" style="transform:scaleX(0.9801);transform-origin:left center;">日付:</span></span><span class="t" id="t56" style="top:140px;font-size:12px;line-height:12px;color:#000;left:568.50px;"><span class="i" style="transform:scaleX(0.9112);transform-origin:left center;">Label:</span></span><span class="t" id="t57" style="top:95px;font-size:12px;line-height:12px;color:#000080;left:616.70px;"><span class="i" style="letter-spacing:0.160px;">DVD-R</span></span><span class="t" id="t58" style="top:110px;font-size:12px;line-height:12px;color:#000080;left:616.70px;"><span class="i" style="transform:scaleX(0.9028);transform-origin:left center;">ProdiscF01</span></span><span class="t" id="t59" style="top:125px;font-size:12px;line-height:12px;color:#000080;left:616.70px;"><span class="i" style="transform:scaleX(0.9677);transform-origin:left center;">29 April 2005</span></span><span class="t" id="t60" style="top:140px;font-size:12px;line-height:12px;color:#000080;left:616.70px;"><span class="i" style="transform:scaleX(0.8663);transform-origin:left center;">CDS_TEST_B2</span></span><span class="t" id="t61" style="top:156px;font-size:12px;line-height:12px;color:#008080;left:569.60px;"><span class="i" style="transform:scaleX(0.9640);transform-origin:left center;">Settings</span></span><span class="t k" id="t62" style="top:174px;font-size:12px;line-height:12px;color:#000;left:568.00px;"><span class="i" style="letter-spacing:0.200px;">転送速度</span></span><span class="t k" id="t63" style="top:174px;font-size:12px;line-height:12px;color:#000;left:634.50px;"><span class="i" style="letter-spacing:0.150px;">最大</span></span><span class="t k" id="t64" style="top:199px;font-size:12px;line-height:12px;color:#000;left:568.00px;"><span class="i" style="letter-spacing:0.150px;">開始</span></span><span class="t" id="t65" style="top:197px;font-size:12px;line-height:12px;color:#000;left:633.70px;"><span class="i" style="transform:scaleX(0.9327);transform-origin:left center;">0000 MB</span></span><span class="t k" id="t66" style="top:222px;font-size:12px;line-height:12px;color:#000;left:568.00px;"><span class="i" style="letter-spacing:0.200px;">終了位置</span></span><span class="t" id="t67" style="top:220px;font-size:12px;line-height:12px;color:#000;left:633.70px;"><span class="i" style="transform:scaleX(0.9327);transform-origin:left center;">4489 MB</span></span><span class="t" id="t68" style="top:243px;font-size:12px;line-height:12px;color:#000;left:585.00px;"><span class="i" style="transform:scaleX(0.9501);transform-origin:left center;">Quick Scan</span></span><span class="t" id="t69" style="top:262px;font-size:12px;line-height:12px;color:#000;left:585.00px;"><span class="i" style="transform:scaleX(0.9499);transform-origin:left center;">Show C1/PIE</span></span><span class="t" id="t70" style="top:277px;font-size:12px;line-height:12px;color:#000;left:585.00px;"><span class="i" style="transform:scaleX(0.9589);transform-origin:left center;">Show C2/PIF</span></span><span class="t" id="t71" style="top:292px;font-size:12px;line-height:12px;color:#000;left:585.00px;"><span class="i" style="transform:scaleX(0.9822);transform-origin:left center;">Show Jitter</span></span><span class="t" id="t72" style="top:307px;font-size:12px;line-height:12px;color:#000;left:585.00px;"><span class="i" style="transform:scaleX(0.9173);transform-origin:left center;">Show Read Speed</span></span><span class="t" id="t73" style="top:322px;font-size:12px;line-height:12px;color:#000;left:585.00px;"><span class="i" style="transform:scaleX(0.9257);transform-origin:left center;">Show Write Speed</span></span><span class="t k" id="t74" style="top:351px;font-size:12px;line-height:12px;color:#000;left:569.20px;"><span class="i" style="letter-spacing:0.150px;">品質</span></span><span class="t k" id="t75" style="top:351px;font-size:12px;line-height:12px;color:#000;left:593.50px;"><span class="i" style="transform:scaleX(0.6939);transform-origin:left center;">スコア:</span></span><span class="t" id="t76" style="top:351px;font-size:12px;line-height:12px;color:#000080;right:36.70px;"><span class="i" style="transform:scaleX(0.8833);transform-origin:right center;">98</span></span><span class="t k" id="t77" style="top:383px;font-size:12px;line-height:12px;color:#000;left:569.20px;"><span class="i" style="transform:scaleX(0.9738);transform-origin:left center;">進行状況:</span></span><span class="t" id="t78" style="top:383px;font-size:12px;line-height:12px;color:#000080;right:36.20px;"><span class="i" style="transform:scaleX(0.8316);transform-origin:right center;">100 %</span></span><span class="t k" id="t79" style="top:401px;font-size:12px;line-height:12px;color:#000;left:569.20px;"><span class="i" style="transform:scaleX(0.7515);transform-origin:left center;">ポジション:</span></span><span class="t" id="t80" style="top:401px;font-size:12px;line-height:12px;color:#000080;right:36.20px;"><span class="i" style="transform:scaleX(0.9473);transform-origin:right center;">4488 MB</span></span><span class="t k" id="t81" style="top:419px;font-size:12px;line-height:12px;color:#000;left:569.20px;"><span class="i" style="transform:scaleX(0.9472);transform-origin:left center;">速度:</span></span><span class="t" id="t82" style="top:419px;font-size:12px;line-height:12px;color:#000080;right:34.00px;"><span class="i" style="transform:scaleX(0.9452);transform-origin:right center;">8.34 X</span></span><span class="t" id="t83" style="top:368px;font-size:12px;line-height:12px;color:#000;left:40.40px;"><span class="i" style="transform:scaleX(0.9378);transform-origin:left center;">PI Errors</span></span><span class="t k" id="t84" style="top:383px;font-size:12px;line-height:12px;color:#000;left:26.70px;"><span class="i" style="transform:scaleX(0.9728);transform-origin:left center;">平均:</span></span><span class="t k" id="t85" style="top:401px;font-size:12px;line-height:12px;color:#000;left:26.70px;"><span class="i" style="transform:scaleX(0.9728);transform-origin:left center;">最大:</span></span><span class="t k" id="t86" style="top:419px;font-size:12px;line-height:12px;color:#000;left:26.70px;"><span class="i" style="letter-spacing:0.132px;">合計 :</span></span><span class="t" id="t87" style="top:383px;font-size:12px;line-height:12px;color:#000080;right:567.40px;"><span class="i" style="transform:scaleX(0.8904);transform-origin:right center;">3.15</span></span><span class="t" id="t88" style="top:401px;font-size:12px;line-height:12px;color:#000080;right:568.00px;"><span class="i" style="transform:scaleX(0.9282);transform-origin:right center;">17</span></span><span class="t" id="t89" style="top:419px;font-size:12px;line-height:12px;color:#000080;right:567.40px;"><span class="i" style="transform:scaleX(0.9109);transform-origin:right center;">30465</span></span><span class="t" id="t90" style="top:368px;font-size:12px;line-height:12px;color:#000;left:220.40px;"><span class="i" style="transform:scaleX(0.9484);transform-origin:left center;">PI Failures</span></span><span class="t k" id="t91" style="top:383px;font-size:12px;line-height:12px;color:#000;left:208.80px;"><span class="i" style="transform:scaleX(0.9728);transform-origin:left center;">平均:</span></span><span class="t k" id="t92" style="top:401px;font-size:12px;line-height:12px;color:#000;left:208.80px;"><span class="i" style="transform:scaleX(0.9728);transform-origin:left center;">最大:</span></span><span class="t k" id="t93" style="top:419px;font-size:12px;line-height:12px;color:#000;left:208.80px;"><span class="i" style="letter-spacing:0.132px;">合計 :</span></span><span class="t" id="t94" style="top:383px;font-size:12px;line-height:12px;color:#000080;right:385.70px;"><span class="i" style="transform:scaleX(0.8690);transform-origin:right center;">0.04</span></span><span class="t" id="t95" style="top:401px;font-size:12px;line-height:12px;color:#000080;right:386.50px;"><span class="i" style="transform:scaleX(0.9421);transform-origin:right center;">4</span></span><span class="t" id="t96" style="top:419px;font-size:12px;line-height:12px;color:#000080;right:385.50px;"><span class="i" style="transform:scaleX(0.9236);transform-origin:right center;">435</span></span><span class="t" id="t97" style="top:368px;font-size:12px;line-height:12px;color:#000;left:402.30px;"><span class="i" style="transform:scaleX(0.9917);transform-origin:left center;">Jitter</span></span><span class="t k" id="t98" style="top:383px;font-size:12px;line-height:12px;color:#000;left:388.80px;"><span class="i" style="transform:scaleX(0.9728);transform-origin:left center;">平均:</span></span><span class="t k" id="t99" style="top:401px;font-size:12px;line-height:12px;color:#000;left:388.80px;"><span class="i" style="transform:scaleX(0.9728);transform-origin:left center;">最大:</span></span><span class="t" id="t100" style="top:383px;font-size:12px;line-height:12px;color:#000080;right:204.70px;"><span class="i" style="transform:scaleX(0.8351);transform-origin:right center;">8.63 %</span></span><span class="t" id="t101" style="top:401px;font-size:12px;line-height:12px;color:#000080;right:204.70px;"><span class="i" style="transform:scaleX(0.8137);transform-origin:right center;">10.5 %</span></span><span class="t" id="t102" style="top:425px;font-size:12px;line-height:12px;color:#000;left:389.40px;"><span class="i" style="transform:scaleX(0.9237);transform-origin:left center;">PO Failures:</span></span><span class="t" id="t103" style="top:425px;font-size:12px;line-height:12px;color:#000080;right:205.20px;"><span class="i" style="letter-spacing:0.013px;margin-right:-0.013px;">0</span></span></div>
</body></html>
